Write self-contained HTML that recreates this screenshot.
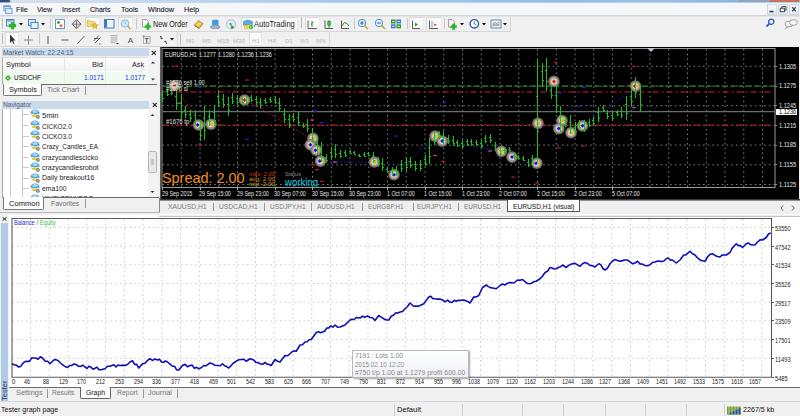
<!DOCTYPE html>
<html><head><meta charset="utf-8">
<style>
*{box-sizing:border-box;margin:0;padding:0}
html,body{width:800px;height:416px;overflow:hidden;background:#f0f0f0;font-family:"Liberation Sans",sans-serif;color:#000}
.a{position:absolute}
.t{position:absolute;white-space:nowrap;line-height:1}
svg{position:absolute;overflow:visible}
</style></head><body>
<div class="a" style="left:0px;top:0px;width:800px;height:3px;background:linear-gradient(90deg,#2f5080 0,#2f5080 9px,#d9deee 11px,#cddcf0 80px,#bcd4ee 200px,#a6c8ec 330px,#9ec4ea 450px,#92bae4 560px,#9cc0e6 650px,#8fb4de 730px)"></div>
<div class="a" style="left:0px;top:1.5px;width:800px;height:1.5px;background:rgba(205,220,238,0.65)"></div>
<div class="a" style="left:739px;top:0px;width:31px;height:1.5px;background:#8fa3bb"></div>
<div class="a" style="left:770px;top:0px;width:29px;height:1.5px;background:#c9705a"></div>
<div class="a" style="left:0px;top:3px;width:800px;height:13px;background:#f5f6f7;border-bottom:1px solid #d5d5d5"></div>
<div class="t" id="t1" style="left:15.6px;top:6px;font-size:8px;color:#141420;transform-origin:0 0;transform:scaleX(0.915);-webkit-text-stroke:0.1px #141420">File</div>
<div class="t" id="t2" style="left:37px;top:6px;font-size:8px;color:#141420;transform-origin:0 0;transform:scaleX(0.878);-webkit-text-stroke:0.1px #141420">View</div>
<div class="t" id="t3" style="left:62px;top:6px;font-size:8px;color:#141420;transform-origin:0 0;transform:scaleX(0.904);-webkit-text-stroke:0.1px #141420">Insert</div>
<div class="t" id="t4" style="left:89.8px;top:6px;font-size:8px;color:#141420;transform-origin:0 0;transform:scaleX(0.870);-webkit-text-stroke:0.1px #141420">Charts</div>
<div class="t" id="t5" style="left:120.5px;top:6px;font-size:8px;color:#141420;transform-origin:0 0;transform:scaleX(0.926);-webkit-text-stroke:0.1px #141420">Tools</div>
<div class="t" id="t6" style="left:148px;top:6px;font-size:8px;color:#141420;transform-origin:0 0;transform:scaleX(0.914);-webkit-text-stroke:0.1px #141420">Window</div>
<div class="t" id="t7" style="left:184.3px;top:6px;font-size:8px;color:#141420;transform-origin:0 0;transform:scaleX(0.912);-webkit-text-stroke:0.1px #141420">Help</div>
<svg style="left:2.5px;top:4.5px" width="10" height="10"><rect x="0.8" y="0.8" width="6.4" height="4.6" fill="#e4eefb" stroke="#5d95dc" stroke-width="0.9"/><rect x="0.8" y="0.8" width="6.4" height="1.1" fill="#5d95dc"/><rect x="2.6" y="3.4" width="6.4" height="5.2" fill="#eef4fc" stroke="#5d95dc" stroke-width="0.9"/><path d="M3.8 5.4h4M3.8 7h4" stroke="#9cc0ec" stroke-width="0.6" stroke-dasharray="1 0.8"/></svg>
<div class="a" style="left:767px;top:4px;width:10px;height:11px;background:linear-gradient(#f4f8fd,#e2ecf8);border:1px solid #cdd8e4"></div>
<div class="a" style="left:778px;top:4px;width:10px;height:11px;background:linear-gradient(#f4f8fd,#e2ecf8);border:1px solid #cdd8e4"></div>
<div class="a" style="left:789px;top:4px;width:10px;height:11px;background:linear-gradient(#f4f8fd,#e2ecf8);border:1px solid #cdd8e4"></div>
<svg style="left:767px;top:4px" width="32" height="11"><rect x="2.5" y="6.8" width="4" height="1.6" fill="#3a3a3a"/><rect x="13.2" y="4.2" width="4.2" height="3.6" fill="none" stroke="#3a3a3a" stroke-width="0.9"/><path d="M14.8 4.2V2.6h4.2v3.6h-1.6" fill="none" stroke="#3a3a3a" stroke-width="0.9"/><path d="M25.2 3.2L28.8 7.4M28.8 3.2L25.2 7.4" stroke="#3a3a3a" stroke-width="1.1"/></svg>
<div class="a" style="left:0;top:16px;width:800px;height:1px;background:#e4e4e4"></div>
<div class="a" style="left:1px;top:31px;width:510px;height:1px;background:#d6d6d6"></div>
<div class="a" style="left:510px;top:17px;width:1px;height:14px;background:#d6d6d6"></div>
<div class="a" style="left:1px;top:45.5px;width:329px;height:1px;background:#d6d6d6"></div>
<div class="a" style="left:177px;top:32px;width:1px;height:14px;background:#d6d6d6"></div>
<div class="a" style="left:329px;top:32px;width:1px;height:14px;background:#d6d6d6"></div>
<div class="a" style="left:2px;top:18px;width:1.2px;height:11px;background:#bdbdbd"></div>
<div class="a" style="left:301px;top:17px;width:1.2px;height:11px;background:#bdbdbd"></div>
<div class="a" style="left:2px;top:33px;width:1.2px;height:11px;background:#bdbdbd"></div>
<div class="a" style="left:180px;top:34px;width:1.2px;height:11px;background:#bdbdbd"></div>
<div class="a" style="left:49.5px;top:18px;width:1px;height:11px;background:#c8c8c8"></div>
<div class="a" style="left:136px;top:18px;width:1px;height:11px;background:#c8c8c8"></div>
<div class="a" style="left:354px;top:18px;width:1px;height:11px;background:#c8c8c8"></div>
<div class="a" style="left:406.5px;top:18px;width:1px;height:11px;background:#c8c8c8"></div>
<div class="a" style="left:443.5px;top:18px;width:1px;height:11px;background:#c8c8c8"></div>
<div class="a" style="left:38.5px;top:33px;width:1px;height:11px;background:#c8c8c8"></div>
<div class="a" style="left:52px;top:16.5px;width:15px;height:13.5px;background:#fafafa;border:1px solid #dadada;border-right-color:#e9e9e9;border-bottom-color:#e9e9e9"></div>
<div class="a" style="left:85px;top:16.5px;width:15px;height:13.5px;background:#fafafa;border:1px solid #dadada;border-right-color:#e9e9e9;border-bottom-color:#e9e9e9"></div>
<div class="a" style="left:118px;top:16.5px;width:15px;height:13.5px;background:#fafafa;border:1px solid #dadada;border-right-color:#e9e9e9;border-bottom-color:#e9e9e9"></div>
<div class="a" style="left:305px;top:16.5px;width:15px;height:13.5px;background:#fafafa;border:1px solid #dadada;border-right-color:#e9e9e9;border-bottom-color:#e9e9e9"></div>
<div class="a" style="left:409px;top:16.5px;width:15px;height:13.5px;background:#fafafa;border:1px solid #dadada;border-right-color:#e9e9e9;border-bottom-color:#e9e9e9"></div>
<div class="a" style="left:426px;top:16.5px;width:16px;height:13.5px;background:#fafafa;border:1px solid #dadada;border-right-color:#e9e9e9;border-bottom-color:#e9e9e9"></div>
<div class="a" style="left:5px;top:32px;width:14px;height:13.5px;background:#fafafa;border:1px solid #dadada;border-right-color:#e9e9e9;border-bottom-color:#e9e9e9"></div>
<div class="a" style="left:249px;top:32px;width:13px;height:13.5px;background:#fafafa;border:1px solid #dadada;border-right-color:#e9e9e9;border-bottom-color:#e9e9e9"></div>
<div class="a" style="left:241px;top:16.5px;width:57px;height:13.5px;background:#fafafa;border:1px solid #dadada;border-right-color:#e9e9e9;border-bottom-color:#e9e9e9"></div>
<svg style="left:0;top:0" width="800" height="50"><rect x="6.5" y="19.5" width="7.5" height="6.5" fill="#dbe8f7" stroke="#4a86c8" stroke-width="1"/><rect x="7" y="20" width="6.5" height="1.5" fill="#7aaee6"/><path d="M11.2 22.5h2.6v2h2v2.6h-2v2h-2.6v-2h-2v-2.6h2z" fill="#1fbe1f" stroke="#128a12" stroke-width="0.4"/><rect x="28.5" y="19.5" width="7" height="6" fill="#dce8f6" stroke="#4a86c8"/><rect x="31" y="22.5" width="7" height="6" fill="#e8f0fa" stroke="#4a86c8"/><rect x="55.5" y="19.5" width="9" height="9" fill="#fff" stroke="#5e9ad6" stroke-width="1"/><circle cx="58.5" cy="22.5" r="1.4" fill="#25a825"/><path d="M61 24L62.8 25.8L61 27.6L59.2 25.8Z" fill="#f06030"/><path d="M76.6 19.7L81.1 24.2L76.6 28.7L72.1 24.2Z" fill="none" stroke="#555" stroke-width="1"/><path d="M76.6 20.5V28M72.9 24.2H80.3" stroke="#555" stroke-width="0.8"/><path d="M87 20.5h3l1 1h3v5h-7z" fill="#f3dc7a" stroke="#c9a83a" stroke-width="0.6"/><path d="M95 22.5l1 2.1 2.2.3-1.6 1.5.4 2.2-2-1.1-2 1.1.4-2.2-1.6-1.5 2.2-.3z" fill="#f2c230" stroke="#b8901a" stroke-width="0.5"/><rect x="104.5" y="19.5" width="9.5" height="8.5" fill="#eef4fb" stroke="#3d7cc4" stroke-width="1"/><rect x="105" y="20" width="2" height="7.5" fill="#3d7cc4"/><circle cx="125" cy="23.5" r="3.8" fill="#d8ebfa" stroke="#7ab0e0" stroke-width="1"/><path d="M125 21.5V23.5L126.5 24.5" stroke="#5a8ec0" stroke-width="0.6" fill="none"/><path d="M127.8 26.3L130.5 29" stroke="#c89a2a" stroke-width="1.5"/><path d="M142.5 19.5h4l2 2v5.5h-6z" fill="#fafafa" stroke="#8a8a8a" stroke-width="0.8"/><path d="M146.8 23.6h2.2v1.8h1.8v2.2h-1.8v1.8h-2.2v-1.8h-1.8v-2.2h1.8z" fill="#1fbe1f" stroke="#128a12" stroke-width="0.3"/><path d="M194.3 25.2L198.6 20.6L203.2 23.6L199.2 28.3Z" fill="#d9a82c" stroke="#9a6c10" stroke-width="0.6"/><path d="M195.6 24.9L198.8 21.6L201.9 23.6L198.9 27Z" fill="#f3d25a"/><path d="M194.5 25.3L199.2 28.3L199.4 29L194.6 26.1Z" fill="#8a5c08"/><rect x="212" y="19.8" width="6.5" height="5.5" rx="1.5" fill="#3f98e0"/><ellipse cx="215.2" cy="27" rx="5" ry="1.8" fill="#9eb4cc" stroke="#6d86a2" stroke-width="0.6"/><circle cx="231" cy="24.2" r="4.6" fill="#e6eef7" stroke="#8fb3d8" stroke-width="0.8"/><path d="M231 24.2L234.5 27.5A4.6 4.6 0 0 1 231 28.8Z" fill="#3aa43a"/><circle cx="230.5" cy="24" r="0.9" fill="#2a5ab0"/><path d="M243.5 21.5q4-3 9 0v3.5h-9z" fill="#5aaae6" stroke="#2c78b8" stroke-width="0.5"/><path d="M243.8 25l8.5 0-1 3.5h-6.5z" fill="#f2d24a" stroke="#c3a020" stroke-width="0.5"/><circle cx="251" cy="27" r="2.4" fill="#1fae1f" stroke="#fff" stroke-width="0.6"/><path d="M250.3 26v2l1.6-1z" fill="#fff"/><path d="M308 20.5V28.5H317" stroke="#333" stroke-width="0.8" fill="none"/><path d="M312 21v6M310.8 24h1.2M312 22.5h1.2" stroke="#1e9a1e" stroke-width="1" fill="none"/><path d="M325 20.5V28.5H333" stroke="#333" stroke-width="0.8" fill="none"/><path d="M329 20v8" stroke="#1e7a1e" stroke-width="0.8"/><rect x="327.8" y="21.5" width="2.6" height="4" fill="#28c828" stroke="#1a7a1a" stroke-width="0.5"/><path d="M341.5 20.5V28.5H349" stroke="#333" stroke-width="0.8" fill="none"/><path d="M342 26L344.5 22.5L347 23.5L349 26" stroke="#1e9a1e" stroke-width="1" fill="none"/><circle cx="362" cy="23" r="3.7" fill="#e2f1fc" stroke="#4a94d6" stroke-width="1"/><path d="M364.6 25.6L368 29" stroke="#d6a820" stroke-width="1.6"/><path d="M360 23H364" stroke="#2a6ab8" stroke-width="1"/><path d="M362 21V25" stroke="#2a6ab8" stroke-width="1"/><circle cx="379" cy="23" r="3.7" fill="#e2f1fc" stroke="#4a94d6" stroke-width="1"/><path d="M381.6 25.6L385 29" stroke="#d6a820" stroke-width="1.6"/><path d="M377 23H381" stroke="#2a6ab8" stroke-width="1"/><rect x="391" y="19.5" width="4.6" height="4" fill="#2a9a2a"/><rect x="396.4" y="19.5" width="4.6" height="4" fill="#3a7ed0"/><rect x="391" y="24.3" width="4.6" height="4" fill="#3a7ed0"/><rect x="396.4" y="24.3" width="4.6" height="4" fill="#2a9a2a"/><path d="M392 21.5h2.6M397.4 21.5h2.6M392 26.3h2.6M397.4 26.3h2.6" stroke="#fff" stroke-width="0.8"/><path d="M412.5 20.5V28.5H420" stroke="#333" stroke-width="0.8" fill="none"/><path d="M415 22.5L418 24.5L415 26.5Z" fill="#20a020"/><path d="M429.5 20.5V28.5H438" stroke="#333" stroke-width="0.8" fill="none"/><path d="M432 21v7" stroke="#4a8ad0" stroke-width="0.8"/><path d="M434 23.5L437 24.8L434 26Z" fill="#e04020"/><path d="M448.5 19.5h4l2 2v5.5h-6z" fill="#fafafa" stroke="#8a8a8a" stroke-width="0.8"/><path d="M452.6 23.8h2.2v1.8h1.8v2.2h-1.8v1.8h-2.2v-1.8h-1.8v-2.2h1.8z" fill="#1fbe1f" stroke="#128a12" stroke-width="0.3"/><circle cx="474.3" cy="23.8" r="4.2" fill="#fff" stroke="#1d5fb0" stroke-width="1.4"/><path d="M474.3 21.5V24L476 25" stroke="#1d3a70" stroke-width="0.7" fill="none"/><rect x="491" y="20" width="10" height="8" fill="#e9f1fa" stroke="#4a86c8" stroke-width="0.9"/><path d="M492.5 24l2.5-1.5 2 1 2.5-1.5M492.5 26l2.5-1 2 .8 2.5-1" stroke="#d05030" stroke-width="0.6" fill="none"/><path d="M492.5 25l2.5-1 2 .8 2.5-1" stroke="#30a030" stroke-width="0.6" fill="none"/><path d="M10 34.5L10 43L12 41L13.5 44L14.5 43.5L13 40.5L15.5 40.5Z" fill="#333"/><path d="M28.5 35.5V44.5M24 40H33" stroke="#8a8a8a" stroke-width="1"/><path d="M48 36V44" stroke="#555" stroke-width="1"/><path d="M61.5 40H68.5" stroke="#666" stroke-width="1.1"/><path d="M77.5 43.5L84.5 36" stroke="#555" stroke-width="0.9"/><path d="M93.5 41L99 35.5M95 43L100.5 37.5M94 38.5L98.5 38.5" stroke="#555" stroke-width="0.9"/><text x="99" y="44.5" font-size="4" font-family="Liberation Sans" fill="#333">c</text><path d="M110.5 35.5h7M110.5 37.3h7M110.5 39.1h7M110.5 40.9h7M110.5 42.7h5" stroke="#9a9a9a" stroke-width="0.7"/><path d="M116 43h3l-1.5 1.5z" fill="#333"/><text x="127.7" y="43.2" font-size="8" font-family="Liberation Sans" fill="#4a4a4a">A</text><rect x="143.5" y="36.5" width="6.5" height="7" fill="none" stroke="#999" stroke-width="0.7"/><text x="144.6" y="43" font-size="7" font-family="Liberation Sans" font-weight="bold" fill="#555">T</text><path d="M142.5 36h2" stroke="#555" stroke-width="0.7"/><path d="M160.5 37.5l2 1.5M164.5 41l2 1.5" stroke="#444" stroke-width="1.3"/><path d="M160 36.5h1.5M166 43.5h1" stroke="#444" stroke-width="1"/></svg>
<svg style="left:18.5px;top:22.8px" width="4" height="3"><path d="M0 0H4L2 2.5Z" fill="#111"/></svg>
<svg style="left:40.5px;top:22.8px" width="4" height="3"><path d="M0 0H4L2 2.5Z" fill="#111"/></svg>
<svg style="left:459.5px;top:22.8px" width="4" height="3"><path d="M0 0H4L2 2.5Z" fill="#111"/></svg>
<svg style="left:481.5px;top:22.8px" width="4" height="3"><path d="M0 0H4L2 2.5Z" fill="#111"/></svg>
<svg style="left:503px;top:22.8px" width="4" height="3"><path d="M0 0H4L2 2.5Z" fill="#111"/></svg>
<svg style="left:169.8px;top:38.3px" width="4" height="3"><path d="M0 0H4L2 2.5Z" fill="#111"/></svg>
<div class="t" id="t8" style="left:153.1px;top:21px;font-size:8.2px;color:#1a1a1a;transform-origin:0 0;transform:scaleX(0.874);">New Order</div>
<div class="t" id="t9" style="left:254.1px;top:21px;font-size:8.2px;color:#1a1a1a;transform-origin:0 0;transform:scaleX(0.921);">AutoTrading</div>
<div class="t" style="left:186px;top:37.8px;font-size:6.1px;color:#b5b5b5;letter-spacing:0.1px">M1</div>
<div class="t" style="left:202px;top:37.8px;font-size:6.1px;color:#b5b5b5;letter-spacing:0.1px">M5</div>
<div class="t" style="left:217px;top:37.8px;font-size:6.1px;color:#b5b5b5;letter-spacing:0.1px">M15</div>
<div class="t" style="left:233px;top:37.8px;font-size:6.1px;color:#b5b5b5;letter-spacing:0.1px">M30</div>
<div class="t" style="left:252px;top:37.8px;font-size:6.1px;color:#b5b5b5;letter-spacing:0.1px">H1</div>
<div class="t" style="left:268px;top:37.8px;font-size:6.1px;color:#b5b5b5;letter-spacing:0.1px">H4</div>
<div class="t" style="left:285px;top:37.8px;font-size:6.1px;color:#b5b5b5;letter-spacing:0.1px">D1</div>
<div class="t" style="left:300px;top:37.8px;font-size:6.1px;color:#b5b5b5;letter-spacing:0.1px">W1</div>
<div class="t" style="left:316px;top:37.8px;font-size:6.1px;color:#b5b5b5;letter-spacing:0.1px">MN</div>
<svg style="left:764px;top:18px" width="36" height="12"><circle cx="7.2" cy="3.8" r="2.6" fill="none" stroke="#2a5ec0" stroke-width="1.3"/><path d="M5.4 5.6L2.5 8.5" stroke="#2a5ec0" stroke-width="1.8"/><ellipse cx="25" cy="6" rx="4" ry="2.8" fill="#f6f6f6" stroke="#8a8a8a" stroke-width="0.8"/><ellipse cx="29.5" cy="4.5" rx="4" ry="2.8" fill="#f6f6f6" stroke="#8a8a8a" stroke-width="0.8"/><path d="M23 8.5L21.5 10.5L25 8.7" fill="#f6f6f6" stroke="#8a8a8a" stroke-width="0.6"/></svg>
<div class="a" style="left:2px;top:48px;width:147px;height:8px;background:#cadaeb"></div>
<div class="t" id="t19" style="left:2.7px;top:50px;font-size:6.8px;color:#4d5e73;transform-origin:0 0;transform:scaleX(0.980);">Market Watch: 22:24:15</div>
<svg style="left:151px;top:49.5px" width="6" height="6"><path d="M0.8 0.8L4.8 4.8M4.8 0.8L0.8 4.8" stroke="#222" stroke-width="1.1"/></svg>
<div class="a" style="left:2px;top:57px;width:146px;height:27px;background:#fff;border-left:1px solid #a8a8a8;border-top:1px solid #dadada"></div>
<div class="a" style="left:3px;top:58px;width:145px;height:13px;background:linear-gradient(#fff,#f2f2f2)"></div>
<div class="a" style="left:64px;top:58px;width:1px;height:13px;background:#e2e2e2"></div>
<div class="a" style="left:105px;top:58px;width:1px;height:13px;background:#e2e2e2"></div>
<div class="a" style="left:3px;top:72px;width:145px;height:12px;background:#effbef"></div>
<div class="a" style="left:64px;top:72px;width:1px;height:12px;background:#e2eee2"></div>
<div class="a" style="left:105px;top:72px;width:1px;height:12px;background:#e2eee2"></div>
<div class="t" id="t20" style="left:5.6px;top:61px;font-size:8px;color:#222;transform-origin:0 0;transform:scaleX(0.922);">Symbol</div>
<div class="t" id="t21" style="left:92px;top:61px;font-size:8px;color:#222;transform-origin:0 0;transform:scaleX(0.934);">Bid</div>
<div class="t" id="t22" style="left:132px;top:61px;font-size:8px;color:#222;transform-origin:0 0;transform:scaleX(0.899);">Ask</div>
<svg style="left:5px;top:75px" width="6" height="6"><path d="M3 0L6 3L3 6L0 3Z" fill="#2aa52a"/><path d="M3 1.5L4.5 3L3 4.5L1.5 3Z" fill="#9fe89f"/></svg>
<div class="t" id="t23" style="left:13.6px;top:74px;font-size:8px;color:#111;transform-origin:0 0;transform:scaleX(0.810);">USDCHF</div>
<div class="t" id="t24" style="left:83.6px;top:74px;font-size:7.8px;color:#2a2ae6;transform-origin:0 0;transform:scaleX(0.838);">1.0171</div>
<div class="t" id="t25" style="left:124.6px;top:74px;font-size:7.8px;color:#2a2ae6;transform-origin:0 0;transform:scaleX(0.847);">1.0177</div>
<div class="a" style="left:148px;top:57px;width:9px;height:27px;background:#f3f3f3"></div>
<svg style="left:149px;top:60px" width="8" height="22"><path d="M2 3.5L4 1.5L6 3.5Z" fill="#333"/><path d="M2 18.5L4 20.5L6 18.5Z" fill="#333"/></svg>
<div class="a" style="left:2px;top:84px;width:155px;height:13px;background:#f0f0f0"></div>
<div class="a" style="left:3px;top:84px;width:39px;height:12px;background:#fff;border:1px solid #777;border-top:none;border-radius:0 0 2px 2px"></div>
<div class="a" style="left:41px;top:84px;width:116px;height:1px;background:#6a6a6a"></div>
<div class="t" id="t26" style="left:8.6px;top:86px;font-size:8px;color:#111;transform-origin:0 0;transform:scaleX(0.906);">Symbols</div>
<div class="t" id="t27" style="left:47.2px;top:86px;font-size:8px;color:#6e6e6e;transform-origin:0 0;transform:scaleX(0.891);">Tick Chart</div>
<div class="a" style="left:85px;top:86px;width:1px;height:9px;background:#999"></div>
<div class="a" style="left:2px;top:101px;width:147px;height:8px;background:#cadaeb"></div>
<div class="t" id="t28" style="left:2.7px;top:102px;font-size:6.8px;color:#4d5e73;transform-origin:0 0;transform:scaleX(0.973);">Navigator</div>
<svg style="left:151.5px;top:102px" width="6" height="6"><path d="M0.8 0.8L4.8 4.8M4.8 0.8L0.8 4.8" stroke="#222" stroke-width="1.1"/></svg>
<div class="a" style="left:2px;top:109px;width:146px;height:89px;background:#fff;border-left:1px solid #a8a8a8;border-bottom:1px solid #a0a0a0"></div>
<div class="a" style="left:148px;top:109px;width:9px;height:89px;background:#f3f3f3;border-bottom:1px solid #a0a0a0"></div>
<svg style="left:148px;top:109px" width="9" height="88"><path d="M2.5 7L4.5 5L6.5 7Z" fill="#333"/><path d="M2.5 82L4.5 84L6.5 82Z" fill="#333"/><rect x="0.5" y="42.5" width="8" height="21" rx="1" fill="#e8e8e8" stroke="#b5b5b5"/><path d="M3 51h3M3 53h3M3 55h3" stroke="#888" stroke-width="0.7"/></svg>
<div class="a" style="left:10px;top:109px;width:1px;height:89px;background:#c8c8c8"></div>
<div class="a" style="left:22px;top:109px;width:1px;height:89px;background:#c8c8c8"></div>
<div class="a" style="left:23px;top:114px;width:6px;height:1px;background:#c8c8c8"></div>
<svg style="left:29.5px;top:109.3px" width="11" height="10"><path d="M0.3 4.6Q1 0.6 5 0.5Q9 0.6 9.8 4.6Q5 6.2 0.3 4.6Z" fill="#4aa3de"/><ellipse cx="5" cy="2.6" rx="2.8" ry="1.5" fill="#a8d8f6"/><path d="M1.2 5.2Q5 6.8 9 5.2L8.2 7.4Q5 8.8 2 7.4Z" fill="#e9c63a"/><circle cx="7.9" cy="7.9" r="1.9" fill="#7e7e7e"/><circle cx="7.9" cy="7.9" r="0.7" fill="#ddd"/></svg>
<div class="t" id="t29" style="left:42.4px;top:112px;font-size:7.6px;color:#1a1a1a;transform-origin:0 0;transform:scaleX(0.996);">5min</div>
<div class="a" style="left:23px;top:125px;width:6px;height:1px;background:#c8c8c8"></div>
<svg style="left:29.5px;top:119.8px" width="11" height="10"><path d="M0.3 4.6Q1 0.6 5 0.5Q9 0.6 9.8 4.6Q5 6.2 0.3 4.6Z" fill="#4aa3de"/><ellipse cx="5" cy="2.6" rx="2.8" ry="1.5" fill="#a8d8f6"/><path d="M1.2 5.2Q5 6.8 9 5.2L8.2 7.4Q5 8.8 2 7.4Z" fill="#e9c63a"/><circle cx="7.9" cy="7.9" r="1.9" fill="#7e7e7e"/><circle cx="7.9" cy="7.9" r="0.7" fill="#ddd"/></svg>
<div class="t" id="t30" style="left:42.4px;top:123px;font-size:7.6px;color:#1a1a1a;transform-origin:0 0;transform:scaleX(0.861);">CICKO2.0</div>
<div class="a" style="left:23px;top:136px;width:6px;height:1px;background:#c8c8c8"></div>
<svg style="left:29.5px;top:130.4px" width="11" height="10"><path d="M0.3 4.6Q1 0.6 5 0.5Q9 0.6 9.8 4.6Q5 6.2 0.3 4.6Z" fill="#4aa3de"/><ellipse cx="5" cy="2.6" rx="2.8" ry="1.5" fill="#a8d8f6"/><path d="M1.2 5.2Q5 6.8 9 5.2L8.2 7.4Q5 8.8 2 7.4Z" fill="#e9c63a"/><circle cx="7.9" cy="7.9" r="1.9" fill="#7e7e7e"/><circle cx="7.9" cy="7.9" r="0.7" fill="#ddd"/></svg>
<div class="t" id="t31" style="left:42.4px;top:133px;font-size:7.6px;color:#1a1a1a;transform-origin:0 0;transform:scaleX(0.861);">CICKO3.0</div>
<div class="a" style="left:23px;top:146px;width:6px;height:1px;background:#c8c8c8"></div>
<svg style="left:29.5px;top:141.0px" width="11" height="10"><path d="M0.3 4.6Q1 0.6 5 0.5Q9 0.6 9.8 4.6Q5 6.2 0.3 4.6Z" fill="#4aa3de"/><ellipse cx="5" cy="2.6" rx="2.8" ry="1.5" fill="#a8d8f6"/><path d="M1.2 5.2Q5 6.8 9 5.2L8.2 7.4Q5 8.8 2 7.4Z" fill="#e9c63a"/><circle cx="7.9" cy="7.9" r="1.9" fill="#7e7e7e"/><circle cx="7.9" cy="7.9" r="0.7" fill="#ddd"/></svg>
<div class="t" id="t32" style="left:42.4px;top:143px;font-size:7.6px;color:#1a1a1a;transform-origin:0 0;transform:scaleX(0.845);">Crazy_Candles_EA</div>
<div class="a" style="left:23px;top:157px;width:6px;height:1px;background:#c8c8c8"></div>
<svg style="left:29.5px;top:151.5px" width="11" height="10"><path d="M0.3 4.6Q1 0.6 5 0.5Q9 0.6 9.8 4.6Q5 6.2 0.3 4.6Z" fill="#4aa3de"/><ellipse cx="5" cy="2.6" rx="2.8" ry="1.5" fill="#a8d8f6"/><path d="M1.2 5.2Q5 6.8 9 5.2L8.2 7.4Q5 8.8 2 7.4Z" fill="#e9c63a"/><circle cx="7.9" cy="7.9" r="1.9" fill="#7e7e7e"/><circle cx="7.9" cy="7.9" r="0.7" fill="#ddd"/></svg>
<div class="t" id="t33" style="left:42.4px;top:154px;font-size:7.6px;color:#1a1a1a;transform-origin:0 0;transform:scaleX(0.909);">crazycandlescicko</div>
<div class="a" style="left:23px;top:167px;width:6px;height:1px;background:#c8c8c8"></div>
<svg style="left:29.5px;top:162.1px" width="11" height="10"><path d="M0.3 4.6Q1 0.6 5 0.5Q9 0.6 9.8 4.6Q5 6.2 0.3 4.6Z" fill="#4aa3de"/><ellipse cx="5" cy="2.6" rx="2.8" ry="1.5" fill="#a8d8f6"/><path d="M1.2 5.2Q5 6.8 9 5.2L8.2 7.4Q5 8.8 2 7.4Z" fill="#e9c63a"/><circle cx="7.9" cy="7.9" r="1.9" fill="#7e7e7e"/><circle cx="7.9" cy="7.9" r="0.7" fill="#ddd"/></svg>
<div class="t" id="t34" style="left:42.4px;top:164px;font-size:7.6px;color:#1a1a1a;transform-origin:0 0;transform:scaleX(0.917);">crazycandlesrobot</div>
<div class="a" style="left:23px;top:178px;width:6px;height:1px;background:#c8c8c8"></div>
<svg style="left:29.5px;top:172.6px" width="11" height="10"><path d="M0.3 4.6Q1 0.6 5 0.5Q9 0.6 9.8 4.6Q5 6.2 0.3 4.6Z" fill="#4aa3de"/><ellipse cx="5" cy="2.6" rx="2.8" ry="1.5" fill="#a8d8f6"/><path d="M1.2 5.2Q5 6.8 9 5.2L8.2 7.4Q5 8.8 2 7.4Z" fill="#e9c63a"/><circle cx="7.9" cy="7.9" r="1.9" fill="#7e7e7e"/><circle cx="7.9" cy="7.9" r="0.7" fill="#ddd"/></svg>
<div class="t" id="t35" style="left:42.4px;top:174px;font-size:7.6px;color:#1a1a1a;transform-origin:0 0;transform:scaleX(0.919);">Daily breakout16</div>
<div class="a" style="left:23px;top:188px;width:6px;height:1px;background:#c8c8c8"></div>
<svg style="left:29.5px;top:183.2px" width="11" height="10"><path d="M0.3 4.6Q1 0.6 5 0.5Q9 0.6 9.8 4.6Q5 6.2 0.3 4.6Z" fill="#4aa3de"/><ellipse cx="5" cy="2.6" rx="2.8" ry="1.5" fill="#a8d8f6"/><path d="M1.2 5.2Q5 6.8 9 5.2L8.2 7.4Q5 8.8 2 7.4Z" fill="#e9c63a"/><circle cx="7.9" cy="7.9" r="1.9" fill="#7e7e7e"/><circle cx="7.9" cy="7.9" r="0.7" fill="#ddd"/></svg>
<div class="t" id="t36" style="left:42.4px;top:185px;font-size:7.6px;color:#1a1a1a;transform-origin:0 0;transform:scaleX(0.889);">ema100</div>
<div class="a" style="left:23px;top:199px;width:6px;height:1px;background:#c8c8c8"></div>
<svg style="left:29.5px;top:193.7px" width="11" height="10"><path d="M0.3 4.6Q1 0.6 5 0.5Q9 0.6 9.8 4.6Q5 6.2 0.3 4.6Z" fill="#4aa3de"/><ellipse cx="5" cy="2.6" rx="2.8" ry="1.5" fill="#a8d8f6"/><path d="M1.2 5.2Q5 6.8 9 5.2L8.2 7.4Q5 8.8 2 7.4Z" fill="#e9c63a"/><circle cx="7.9" cy="7.9" r="1.9" fill="#7e7e7e"/><circle cx="7.9" cy="7.9" r="0.7" fill="#ddd"/></svg>
<div class="a" style="left:40px;top:193px;width:108px;height:4px;overflow:hidden"><div class="t" style="left:2.4px;top:1.6px;font-size:7.6px;color:#1a1a1a;transform-origin:0 0;transform:scaleX(0.86)">VIVOLTONYDDO</div></div>
<div class="a" style="left:2px;top:198px;width:155px;height:12px;background:#f0f0f0"></div>
<div class="a" style="left:3px;top:197px;width:41px;height:13px;background:#fff;border:1px solid #777;border-top:none;border-radius:0 0 2px 2px"></div>
<div class="a" style="left:43px;top:197px;width:116px;height:1px;background:#6a6a6a"></div>
<div class="t" id="t37" style="left:9px;top:200px;font-size:8px;color:#111;transform-origin:0 0;transform:scaleX(0.943);">Common</div>
<div class="t" id="t38" style="left:50.6px;top:200px;font-size:8px;color:#6e6e6e;transform-origin:0 0;transform:scaleX(0.857);">Favorites</div>
<div class="a" style="left:85px;top:199px;width:1px;height:9px;background:#999"></div>
<div class="a" style="left:160px;top:47px;width:638.5px;height:152px;background:#000"></div>
<svg style="left:0;top:0" width="800" height="416" viewBox="0 0 800 416"><rect x="162" y="48.5" width="613" height="139" fill="none" stroke="#9a9a9a" stroke-width="1"/><rect x="160" y="47" width="1.2" height="152" fill="#5a5a5a"/><line x1="181.25" y1="49" x2="181.25" y2="187.5" stroke="#8c8c8c" stroke-width="0.9" stroke-dasharray="1.6 3.1"/><line x1="200.00" y1="49" x2="200.00" y2="187.5" stroke="#8c8c8c" stroke-width="0.9" stroke-dasharray="1.6 3.1"/><line x1="218.75" y1="49" x2="218.75" y2="187.5" stroke="#8c8c8c" stroke-width="0.9" stroke-dasharray="1.6 3.1"/><line x1="237.50" y1="49" x2="237.50" y2="187.5" stroke="#8c8c8c" stroke-width="0.9" stroke-dasharray="1.6 3.1"/><line x1="256.25" y1="49" x2="256.25" y2="187.5" stroke="#8c8c8c" stroke-width="0.9" stroke-dasharray="1.6 3.1"/><line x1="275.00" y1="49" x2="275.00" y2="187.5" stroke="#8c8c8c" stroke-width="0.9" stroke-dasharray="1.6 3.1"/><line x1="293.75" y1="49" x2="293.75" y2="187.5" stroke="#8c8c8c" stroke-width="0.9" stroke-dasharray="1.6 3.1"/><line x1="312.50" y1="49" x2="312.50" y2="187.5" stroke="#8c8c8c" stroke-width="0.9" stroke-dasharray="1.6 3.1"/><line x1="331.25" y1="49" x2="331.25" y2="187.5" stroke="#8c8c8c" stroke-width="0.9" stroke-dasharray="1.6 3.1"/><line x1="350.00" y1="49" x2="350.00" y2="187.5" stroke="#8c8c8c" stroke-width="0.9" stroke-dasharray="1.6 3.1"/><line x1="368.75" y1="49" x2="368.75" y2="187.5" stroke="#8c8c8c" stroke-width="0.9" stroke-dasharray="1.6 3.1"/><line x1="387.50" y1="49" x2="387.50" y2="187.5" stroke="#8c8c8c" stroke-width="0.9" stroke-dasharray="1.6 3.1"/><line x1="406.25" y1="49" x2="406.25" y2="187.5" stroke="#8c8c8c" stroke-width="0.9" stroke-dasharray="1.6 3.1"/><line x1="425.00" y1="49" x2="425.00" y2="187.5" stroke="#8c8c8c" stroke-width="0.9" stroke-dasharray="1.6 3.1"/><line x1="443.75" y1="49" x2="443.75" y2="187.5" stroke="#8c8c8c" stroke-width="0.9" stroke-dasharray="1.6 3.1"/><line x1="462.50" y1="49" x2="462.50" y2="187.5" stroke="#8c8c8c" stroke-width="0.9" stroke-dasharray="1.6 3.1"/><line x1="481.25" y1="49" x2="481.25" y2="187.5" stroke="#8c8c8c" stroke-width="0.9" stroke-dasharray="1.6 3.1"/><line x1="500.00" y1="49" x2="500.00" y2="187.5" stroke="#8c8c8c" stroke-width="0.9" stroke-dasharray="1.6 3.1"/><line x1="518.75" y1="49" x2="518.75" y2="187.5" stroke="#8c8c8c" stroke-width="0.9" stroke-dasharray="1.6 3.1"/><line x1="537.50" y1="49" x2="537.50" y2="187.5" stroke="#8c8c8c" stroke-width="0.9" stroke-dasharray="1.6 3.1"/><line x1="556.25" y1="49" x2="556.25" y2="187.5" stroke="#8c8c8c" stroke-width="0.9" stroke-dasharray="1.6 3.1"/><line x1="575.00" y1="49" x2="575.00" y2="187.5" stroke="#8c8c8c" stroke-width="0.9" stroke-dasharray="1.6 3.1"/><line x1="593.75" y1="49" x2="593.75" y2="187.5" stroke="#8c8c8c" stroke-width="0.9" stroke-dasharray="1.6 3.1"/><line x1="612.50" y1="49" x2="612.50" y2="187.5" stroke="#8c8c8c" stroke-width="0.9" stroke-dasharray="1.6 3.1"/><line x1="631.25" y1="49" x2="631.25" y2="187.5" stroke="#8c8c8c" stroke-width="0.9" stroke-dasharray="1.6 3.1"/><line x1="650.00" y1="49" x2="650.00" y2="187.5" stroke="#8c8c8c" stroke-width="0.9" stroke-dasharray="1.6 3.1"/><line x1="668.75" y1="49" x2="668.75" y2="187.5" stroke="#8c8c8c" stroke-width="0.9" stroke-dasharray="1.6 3.1"/><line x1="687.50" y1="49" x2="687.50" y2="187.5" stroke="#8c8c8c" stroke-width="0.9" stroke-dasharray="1.6 3.1"/><line x1="706.25" y1="49" x2="706.25" y2="187.5" stroke="#8c8c8c" stroke-width="0.9" stroke-dasharray="1.6 3.1"/><line x1="725.00" y1="49" x2="725.00" y2="187.5" stroke="#8c8c8c" stroke-width="0.9" stroke-dasharray="1.6 3.1"/><line x1="743.75" y1="49" x2="743.75" y2="187.5" stroke="#8c8c8c" stroke-width="0.9" stroke-dasharray="1.6 3.1"/><line x1="762.50" y1="49" x2="762.50" y2="187.5" stroke="#8c8c8c" stroke-width="0.9" stroke-dasharray="1.6 3.1"/><line x1="162.5" y1="66.30" x2="775" y2="66.30" stroke="#8c8c8c" stroke-width="0.9" stroke-dasharray="1.6 3.1"/><line x1="162.5" y1="86.00" x2="775" y2="86.00" stroke="#8c8c8c" stroke-width="0.9" stroke-dasharray="1.6 3.1"/><line x1="162.5" y1="105.70" x2="775" y2="105.70" stroke="#8c8c8c" stroke-width="0.9" stroke-dasharray="1.6 3.1"/><line x1="162.5" y1="125.40" x2="775" y2="125.40" stroke="#8c8c8c" stroke-width="0.9" stroke-dasharray="1.6 3.1"/><line x1="162.5" y1="145.10" x2="775" y2="145.10" stroke="#8c8c8c" stroke-width="0.9" stroke-dasharray="1.6 3.1"/><line x1="162.5" y1="164.80" x2="775" y2="164.80" stroke="#8c8c8c" stroke-width="0.9" stroke-dasharray="1.6 3.1"/><line x1="162.5" y1="184.50" x2="775" y2="184.50" stroke="#8c8c8c" stroke-width="0.9" stroke-dasharray="1.6 3.1"/><line x1="162.5" y1="86.1" x2="775" y2="86.1" stroke="#1e8c1e" stroke-width="1.3" stroke-dasharray="5 3"/><line x1="162.5" y1="91.9" x2="775" y2="91.9" stroke="#b01818" stroke-width="1.3" stroke-dasharray="6 3 2 3"/><line x1="162.5" y1="125.2" x2="775" y2="125.2" stroke="#b01818" stroke-width="1.3" stroke-dasharray="6 3 2 3"/><line x1="162.5" y1="111.6" x2="775" y2="111.6" stroke="#686d74" stroke-width="1.2"/><line x1="179" y1="92" x2="197" y2="119" stroke="#c01818" stroke-width="1" stroke-dasharray="1.5 2"/><line x1="248" y1="101" x2="310" y2="138" stroke="#c01818" stroke-width="1" stroke-dasharray="1.5 2"/><line x1="198" y1="125" x2="210" y2="124" stroke="#2020d8" stroke-width="1" stroke-dasharray="1.5 2"/><line x1="330" y1="162" x2="374" y2="162" stroke="#2020d8" stroke-width="1" stroke-dasharray="1.5 2"/><line x1="395" y1="174" x2="432" y2="140" stroke="#2020d8" stroke-width="1" stroke-dasharray="1.5 2"/><line x1="442" y1="141" x2="501" y2="151" stroke="#2020d8" stroke-width="1" stroke-dasharray="1.5 2"/><line x1="512" y1="157" x2="536" y2="163" stroke="#2020d8" stroke-width="1" stroke-dasharray="1.5 2"/><line x1="537.4" y1="123" x2="537.4" y2="163" stroke="#2020d8" stroke-width="1" stroke-dasharray="1.5 2"/><line x1="559" y1="128" x2="571" y2="133" stroke="#2020d8" stroke-width="1" stroke-dasharray="1.5 2"/><line x1="583" y1="126" x2="632" y2="90" stroke="#2020d8" stroke-width="1" stroke-dasharray="1.5 2"/><line x1="316" y1="150" x2="320" y2="161" stroke="#2020d8" stroke-width="1" stroke-dasharray="1.5 2"/><rect x="174.39999999999998" y="65.4" width="3.6" height="1.3" fill="#c01818"/><rect x="245.2" y="79.4" width="3.6" height="1.3" fill="#c01818"/><rect x="632.2" y="65.80000000000001" width="3.6" height="1.3" fill="#c01818"/><rect x="553.8000000000001" y="61.9" width="3.6" height="1.3" fill="#c01818"/><rect x="177.2" y="102.4" width="3.6" height="1.3" fill="#c040a0"/><rect x="433.2" y="154.9" width="3.6" height="1.3" fill="#c040a0"/><rect x="488.2" y="150.4" width="3.6" height="1.3" fill="#c040a0"/><rect x="632.2" y="107.0" width="3.6" height="1.3" fill="#c040a0"/><rect x="333.2" y="161.4" width="3.6" height="1.3" fill="#c040a0"/><rect x="311.2" y="163.9" width="3.6" height="1.3" fill="#c01818"/><rect x="315.2" y="169.0" width="3.6" height="1.3" fill="#c01818"/><rect x="320.2" y="180.70000000000002" width="3.6" height="1.3" fill="#c01818"/><rect x="441.2" y="160.70000000000002" width="3.6" height="1.3" fill="#c01818"/><rect x="557.2" y="147.20000000000002" width="3.6" height="1.3" fill="#c01818"/><rect x="581.2" y="145.4" width="3.6" height="1.3" fill="#c01818"/><rect x="511.2" y="176.4" width="3.6" height="1.3" fill="#c01818"/><rect x="394.2" y="135.4" width="3.6" height="1.3" fill="#2020d8"/><rect x="245.2" y="138.8" width="3.6" height="1.3" fill="#2020d8"/><rect x="198.0" y="85.5" width="3.6" height="1.3" fill="#2020d8"/><rect x="442.2" y="101.9" width="3.6" height="1.3" fill="#2020d8"/><rect x="558.2" y="92.4" width="3.6" height="1.3" fill="#2020d8"/><rect x="578.2" y="105.4" width="3.6" height="1.3" fill="#2020d8"/><rect x="582.2" y="86.9" width="3.6" height="1.3" fill="#2020d8"/><rect x="198.2" y="144.4" width="3.6" height="1.3" fill="#c01818"/><rect x="535.2" y="182.4" width="3.6" height="1.3" fill="#c01818"/><rect x="558.2" y="123.4" width="3.6" height="1.3" fill="#c040a0"/><rect x="313.7" y="110.4" width="3.6" height="1.3" fill="#2020d8"/><rect x="319.7" y="121.9" width="3.6" height="1.3" fill="#2020d8"/><rect x="310.2" y="119.4" width="3.6" height="1.3" fill="#c040a0"/><circle cx="174.5" cy="85.5" r="5.8" fill="#7a7064" opacity="0.95"/><circle cx="174.5" cy="85.5" r="4.6" fill="#a09486"/><circle cx="174.5" cy="85.5" r="3.1" fill="#d8cfc4"/><path d="M172.5 85.5L174.5 83.5L176.5 85.5L174.5 87.5Z" fill="#f01010"/><circle cx="244.5" cy="100" r="5.8" fill="#7a7064" opacity="0.95"/><circle cx="244.5" cy="100" r="4.6" fill="#a09486"/><circle cx="244.5" cy="100" r="3.1" fill="#d8cfc4"/><path d="M242.5 100L244.5 98L246.5 100L244.5 102Z" fill="#f01010"/><circle cx="198.5" cy="125" r="5.8" fill="#7a7064" opacity="0.95"/><circle cx="198.5" cy="125" r="4.6" fill="#a09486"/><circle cx="198.5" cy="125" r="3.1" fill="#d8cfc4"/><path d="M195.7 125L197.7 123L199.7 125L197.7 127Z" fill="#1010f0"/><path d="M199.1 125L201.7 123V127Z" fill="#f0a818"/><circle cx="211" cy="124.2" r="5.8" fill="#7a7064" opacity="0.95"/><circle cx="211" cy="124.2" r="4.6" fill="#a09486"/><circle cx="211" cy="124.2" r="3.1" fill="#d8cfc4"/><path d="M209.2 124.2L212.8 121.8V126.60000000000001Z" fill="#f0a818"/><circle cx="312.9" cy="138.4" r="5.8" fill="#7a7064" opacity="0.95"/><circle cx="312.9" cy="138.4" r="4.6" fill="#a09486"/><circle cx="312.9" cy="138.4" r="3.1" fill="#d8cfc4"/><path d="M311.09999999999997 138.4L314.7 136.0V140.8Z" fill="#f0a818"/><circle cx="310.4" cy="144.8" r="5.8" fill="#7a7064" opacity="0.95"/><circle cx="310.4" cy="144.8" r="4.6" fill="#a09486"/><circle cx="310.4" cy="144.8" r="3.1" fill="#d8cfc4"/><path d="M308.4 144.8L310.4 142.8L312.4 144.8L310.4 146.8Z" fill="#1010f0"/><circle cx="316.2" cy="150.2" r="5.8" fill="#7a7064" opacity="0.95"/><circle cx="316.2" cy="150.2" r="4.6" fill="#a09486"/><circle cx="316.2" cy="150.2" r="3.1" fill="#d8cfc4"/><path d="M313.4 150.2L315.4 148.2L317.4 150.2L315.4 152.2Z" fill="#1010f0"/><path d="M316.8 150.2L319.4 148.2V152.2Z" fill="#f0a818"/><circle cx="320.5" cy="161.1" r="5.8" fill="#7a7064" opacity="0.95"/><circle cx="320.5" cy="161.1" r="4.6" fill="#a09486"/><circle cx="320.5" cy="161.1" r="3.1" fill="#d8cfc4"/><path d="M317.7 161.1L319.7 159.1L321.7 161.1L319.7 163.1Z" fill="#1010f0"/><path d="M321.1 161.1L323.7 159.1V163.1Z" fill="#f0a818"/><circle cx="374.3" cy="162" r="5.8" fill="#7a7064" opacity="0.95"/><circle cx="374.3" cy="162" r="4.6" fill="#a09486"/><circle cx="374.3" cy="162" r="3.1" fill="#d8cfc4"/><path d="M372.5 162L376.1 159.6V164.4Z" fill="#f0a818"/><circle cx="394" cy="174.7" r="5.8" fill="#7a7064" opacity="0.95"/><circle cx="394" cy="174.7" r="4.6" fill="#a09486"/><circle cx="394" cy="174.7" r="3.1" fill="#d8cfc4"/><path d="M392 174.7L394 172.7L396 174.7L394 176.7Z" fill="#1010f0"/><circle cx="435.1" cy="136.1" r="5.8" fill="#7a7064" opacity="0.95"/><circle cx="435.1" cy="136.1" r="4.6" fill="#a09486"/><circle cx="435.1" cy="136.1" r="3.1" fill="#d8cfc4"/><path d="M433.3 136.1L436.90000000000003 133.7V138.5Z" fill="#f0a818"/><circle cx="442.2" cy="141.1" r="5.8" fill="#7a7064" opacity="0.95"/><circle cx="442.2" cy="141.1" r="4.6" fill="#a09486"/><circle cx="442.2" cy="141.1" r="3.1" fill="#d8cfc4"/><path d="M440.2 141.1L442.2 139.1L444.2 141.1L442.2 143.1Z" fill="#1010f0"/><circle cx="501.4" cy="151.3" r="5.8" fill="#7a7064" opacity="0.95"/><circle cx="501.4" cy="151.3" r="4.6" fill="#a09486"/><circle cx="501.4" cy="151.3" r="3.1" fill="#d8cfc4"/><path d="M499.59999999999997 151.3L503.2 148.9V153.70000000000002Z" fill="#f0a818"/><circle cx="512" cy="157.1" r="5.8" fill="#7a7064" opacity="0.95"/><circle cx="512" cy="157.1" r="4.6" fill="#a09486"/><circle cx="512" cy="157.1" r="3.1" fill="#d8cfc4"/><path d="M510 157.1L512 155.1L514 157.1L512 159.1Z" fill="#1010f0"/><circle cx="536.8" cy="163.2" r="5.8" fill="#7a7064" opacity="0.95"/><circle cx="536.8" cy="163.2" r="4.6" fill="#a09486"/><circle cx="536.8" cy="163.2" r="3.1" fill="#d8cfc4"/><path d="M534.0 163.2L536.0 161.2L538.0 163.2L536.0 165.2Z" fill="#1010f0"/><path d="M537.4 163.2L540.0 161.2V165.2Z" fill="#f0a818"/><circle cx="538" cy="123.3" r="5.8" fill="#7a7064" opacity="0.95"/><circle cx="538" cy="123.3" r="4.6" fill="#a09486"/><circle cx="538" cy="123.3" r="3.1" fill="#d8cfc4"/><path d="M536.2 123.3L539.8 120.89999999999999V125.7Z" fill="#f0a818"/><circle cx="554" cy="81.4" r="5.8" fill="#7a7064" opacity="0.95"/><circle cx="554" cy="81.4" r="4.6" fill="#a09486"/><circle cx="554" cy="81.4" r="3.1" fill="#d8cfc4"/><path d="M552 81.4L554 79.4L556 81.4L554 83.4Z" fill="#f01010"/><circle cx="562" cy="120.5" r="5.8" fill="#7a7064" opacity="0.95"/><circle cx="562" cy="120.5" r="4.6" fill="#a09486"/><circle cx="562" cy="120.5" r="3.1" fill="#d8cfc4"/><path d="M560.2 120.5L563.8 118.1V122.9Z" fill="#f0a818"/><circle cx="558.8" cy="128.6" r="5.8" fill="#7a7064" opacity="0.95"/><circle cx="558.8" cy="128.6" r="4.6" fill="#a09486"/><circle cx="558.8" cy="128.6" r="3.1" fill="#d8cfc4"/><path d="M556.8 128.6L558.8 126.6L560.8 128.6L558.8 130.6Z" fill="#1010f0"/><circle cx="571" cy="132.7" r="5.8" fill="#7a7064" opacity="0.95"/><circle cx="571" cy="132.7" r="4.6" fill="#a09486"/><circle cx="571" cy="132.7" r="3.1" fill="#d8cfc4"/><path d="M569.2 132.7L572.8 130.29999999999998V135.1Z" fill="#f0a818"/><circle cx="582.5" cy="125.8" r="5.8" fill="#7a7064" opacity="0.95"/><circle cx="582.5" cy="125.8" r="4.6" fill="#a09486"/><circle cx="582.5" cy="125.8" r="3.1" fill="#d8cfc4"/><path d="M580.5 125.8L582.5 123.8L584.5 125.8L582.5 127.8Z" fill="#1010f0"/><circle cx="635.5" cy="86.1" r="5.8" fill="#7a7064" opacity="0.95"/><circle cx="635.5" cy="86.1" r="4.6" fill="#a09486"/><circle cx="635.5" cy="86.1" r="3.1" fill="#d8cfc4"/><path d="M632.7 86.1L634.7 84.1L636.7 86.1L634.7 88.1Z" fill="#f01010"/><path d="M636.1 86.1L638.7 84.1V88.1Z" fill="#f0a818"/><path d="M162.5 90V102M161.0 94.5h1M163.0 98.5h1M167.5 89V96M166.0 91.5h1M168.0 94.5h1M171.5 88V95M170.0 90.5h1M172.0 93.5h1M176.5 88V110M175.0 96.5h1M177.0 103.5h1M181.5 94V119M180.0 103.5h1M182.0 112.5h1M185.5 106V118M184.0 110.5h1M186.0 114.5h1M190.5 110V122M189.0 114.5h1M191.0 118.5h1M195.5 110V125M194.0 115.5h1M196.0 120.5h1M200.5 120V141M199.0 127.5h1M201.0 135.5h1M204.5 106V140M203.0 118.5h1M205.0 130.5h1M209.5 110V126M208.0 116.5h1M210.0 121.5h1M214.5 105V126M213.0 112.5h1M215.0 120.5h1M218.5 90V107M217.0 96.5h1M219.0 102.5h1M223.5 94V108M222.0 99.5h1M224.0 104.5h1M228.5 97V116M227.0 104.5h1M229.0 110.5h1M232.5 93V104M231.0 97.5h1M233.0 101.5h1M237.5 95V105M236.0 98.5h1M238.0 102.5h1M242.5 97V104M241.0 99.5h1M243.0 102.5h1M246.5 96V104M245.0 99.5h1M247.0 102.5h1M251.5 95V102M250.0 97.5h1M252.0 100.5h1M256.5 96V105M255.0 99.5h1M257.0 102.5h1M260.5 98V108M259.0 102.5h1M261.0 105.5h1M265.5 98V104M264.0 100.5h1M266.0 102.5h1M270.5 97V103M269.0 99.5h1M271.0 101.5h1M275.5 96V104M274.0 99.5h1M276.0 102.5h1M279.5 98V112M278.0 103.5h1M280.0 108.5h1M284.5 109V123M283.0 114.5h1M285.0 119.5h1M289.5 114V128M288.0 119.5h1M290.0 124.5h1M293.5 113V122M292.0 116.5h1M294.0 119.5h1M298.5 112V126M297.0 117.5h1M299.0 122.5h1M303.5 123V128M302.0 125.5h1M304.0 126.5h1M307.5 119V132M306.0 124.5h1M308.0 128.5h1M312.5 128V143M311.0 133.5h1M313.0 138.5h1M317.5 137V154M316.0 143.5h1M318.0 149.5h1M321.5 142V162M320.0 149.5h1M322.0 156.5h1M326.5 154V163M325.0 157.5h1M327.0 160.5h1M331.5 147V160M330.0 152.5h1M332.0 156.5h1M335.5 144V158M334.0 149.5h1M336.0 154.5h1M340.5 150V158M339.0 153.5h1M341.0 156.5h1M345.5 150V157M344.0 152.5h1M346.0 155.5h1M350.5 150V154M349.0 151.5h1M351.0 153.5h1M354.5 151V155M353.0 152.5h1M355.0 154.5h1M359.5 154V157M358.0 155.5h1M360.0 156.5h1M364.5 152V157M363.0 154.5h1M365.0 156.5h1M368.5 152V156M367.0 153.5h1M369.0 155.5h1M373.5 152V163M372.0 156.5h1M374.0 160.5h1M378.5 157V167M377.0 160.5h1M379.0 164.5h1M382.5 158V171M381.0 163.5h1M383.0 167.5h1M387.5 168V172M386.0 169.5h1M388.0 171.5h1M392.5 167V176M391.0 170.5h1M393.0 173.5h1M396.5 166V176M395.0 170.5h1M397.0 173.5h1M401.5 160V172M400.0 164.5h1M402.0 168.5h1M406.5 157V171M405.0 162.5h1M407.0 167.5h1M410.5 157V168M409.0 161.5h1M411.0 165.5h1M415.5 161V171M414.0 164.5h1M416.0 168.5h1M420.5 160V171M419.0 164.5h1M421.0 168.5h1M425.5 155V166M424.0 159.5h1M426.0 163.5h1M429.5 138V164M428.0 147.5h1M430.0 156.5h1M434.5 132V145M433.0 137.5h1M435.0 141.5h1M439.5 131V140M438.0 134.5h1M440.0 137.5h1M443.5 131V144M442.0 136.5h1M444.0 140.5h1M448.5 135V144M447.0 138.5h1M449.0 141.5h1M453.5 136V146M452.0 140.5h1M454.0 143.5h1M457.5 140V147M456.0 142.5h1M458.0 145.5h1M462.5 140V148M461.0 143.5h1M463.0 146.5h1M467.5 139V146M466.0 141.5h1M468.0 144.5h1M471.5 139V146M470.0 141.5h1M472.0 144.5h1M476.5 140V146M475.0 142.5h1M477.0 144.5h1M481.5 140V148M480.0 143.5h1M482.0 146.5h1M485.5 135V143M484.0 138.5h1M486.0 141.5h1M490.5 134V143M489.0 137.5h1M491.0 140.5h1M495.5 142V151M494.0 145.5h1M496.0 148.5h1M500.5 147V156M499.0 150.5h1M501.0 153.5h1M504.5 148V154M503.0 150.5h1M505.0 152.5h1M509.5 147V152M508.0 149.5h1M510.0 150.5h1M514.5 153V159M513.0 155.5h1M515.0 157.5h1M518.5 155V160M517.0 157.5h1M519.0 158.5h1M523.5 156V161M522.0 158.5h1M524.0 160.5h1M528.5 159V167M527.0 162.5h1M529.0 165.5h1M532.5 155V165M531.0 158.5h1M533.0 162.5h1M537.5 60V162M536.0 96.5h1M538.0 131.5h1M542.5 63V87M541.0 71.5h1M543.0 80.5h1M546.5 58V91M545.0 70.5h1M547.0 81.5h1M551.5 85V99M550.0 90.5h1M552.0 95.5h1M556.5 85V113M555.0 95.5h1M557.0 105.5h1M560.5 106V132M559.0 115.5h1M561.0 124.5h1M565.5 117V127M564.0 120.5h1M566.0 124.5h1M570.5 115V134M569.0 122.5h1M571.0 128.5h1M575.5 122V135M574.0 127.5h1M576.0 131.5h1M579.5 120V130M578.0 124.5h1M580.0 127.5h1M584.5 120V132M583.0 124.5h1M585.0 128.5h1M589.5 119V127M588.0 122.5h1M590.0 125.5h1M593.5 117V126M592.0 120.5h1M594.0 123.5h1M598.5 107V122M597.0 112.5h1M599.0 118.5h1M603.5 105V112M602.0 107.5h1M604.0 110.5h1M607.5 110V119M606.0 113.5h1M608.0 116.5h1M612.5 112V120M611.0 115.5h1M613.0 118.5h1M617.5 110V116M616.0 112.5h1M618.0 114.5h1M621.5 107V118M620.0 111.5h1M622.0 115.5h1M626.5 96V120M625.0 104.5h1M627.0 113.5h1M631.5 90V106M630.0 96.5h1M632.0 101.5h1M635.5 77V98M634.0 84.5h1M636.0 92.5h1M640.5 85V112M639.0 94.5h1M641.0 104.5h1" stroke="#18c418" stroke-width="1" fill="none" shape-rendering="crispEdges"/></svg>
<div class="t" id="t39" style="left:164.5px;top:52px;font-size:6.9px;color:#e8e8e8;transform-origin:0 0;transform:scaleX(0.796);">EURUSD,H1</div>
<div class="t" id="t40" style="left:199.4px;top:52px;font-size:6.9px;color:#e8e8e8;transform-origin:0 0;transform:scaleX(0.797);">1.1277</div>
<div class="t" id="t41" style="left:217.9px;top:52px;font-size:6.9px;color:#e8e8e8;transform-origin:0 0;transform:scaleX(0.797);">1.1280</div>
<div class="t" id="t42" style="left:236.6px;top:52px;font-size:6.9px;color:#e8e8e8;transform-origin:0 0;transform:scaleX(0.797);">1.1236</div>
<div class="t" id="t43" style="left:255.1px;top:52px;font-size:6.9px;color:#e8e8e8;transform-origin:0 0;transform:scaleX(0.797);">1.1236</div>
<div class="t" id="t44" style="left:165.6px;top:80px;font-size:6.8px;color:#e0e0e0;transform-origin:0 0;transform:scaleX(0.841);">#1676 sell 1.00</div>
<div class="t" id="t45" style="left:165.6px;top:86px;font-size:6.8px;color:#e0e0e0;transform-origin:0 0;transform:scaleX(0.848);">#1676 sl</div>
<div class="t" id="t46" style="left:165.5px;top:119px;font-size:6.8px;color:#e0e0e0;transform-origin:0 0;transform:scaleX(0.880);">#1676 tp</div>
<div class="t" id="t47" style="left:162.3px;top:171px;font-size:14px;color:#f5901a;transform-origin:0 0;transform:scaleX(1.029);">Spread: 2.00</div>
<div class="t" id="t48" style="left:248.5px;top:172px;font-size:5.6px;color:#d83a10;transform-origin:0 0;transform:scaleX(1.058);">max: 2.00</div>
<div class="t" id="t49" style="left:248.5px;top:177px;font-size:5.6px;color:#e08a18;transform-origin:0 0;transform:scaleX(1.130);">avg: 2.00</div>
<div class="t" id="t50" style="left:248.5px;top:182px;font-size:5.6px;color:#d8c020;transform-origin:0 0;transform:scaleX(1.130);">min: 2.00</div>
<div class="t" id="t51" style="left:285.3px;top:171px;font-size:6px;color:#8c8c8c;transform-origin:0 0;transform:scaleX(0.940);">Status</div>
<div class="t" id="t52" style="left:285.2px;top:178px;font-size:10.2px;color:#10d0e0;transform-origin:0 0;transform:scaleX(0.940);">working</div>
<div class="a" style="left:775px;top:65.8px;width:2px;height:1px;background:#8a8a8a"></div>
<div class="t" id="t53" style="left:779.1px;top:64px;font-size:6.7px;color:#e8e8e8;transform-origin:0 0;transform:scaleX(0.840);">1.1305</div>
<div class="a" style="left:775px;top:85.5px;width:2px;height:1px;background:#8a8a8a"></div>
<div class="t" id="t54" style="left:779.1px;top:83px;font-size:6.7px;color:#e8e8e8;transform-origin:0 0;transform:scaleX(0.840);">1.1275</div>
<div class="a" style="left:775px;top:105.2px;width:2px;height:1px;background:#8a8a8a"></div>
<div class="t" id="t55" style="left:779.1px;top:103px;font-size:6.7px;color:#e8e8e8;transform-origin:0 0;transform:scaleX(0.840);">1.1245</div>
<div class="a" style="left:775px;top:124.9px;width:2px;height:1px;background:#8a8a8a"></div>
<div class="t" id="t56" style="left:779.1px;top:123px;font-size:6.7px;color:#e8e8e8;transform-origin:0 0;transform:scaleX(0.840);">1.1215</div>
<div class="a" style="left:775px;top:144.6px;width:2px;height:1px;background:#8a8a8a"></div>
<div class="t" id="t57" style="left:779.1px;top:142px;font-size:6.7px;color:#e8e8e8;transform-origin:0 0;transform:scaleX(0.861);">1.1185</div>
<div class="a" style="left:775px;top:164.3px;width:2px;height:1px;background:#8a8a8a"></div>
<div class="t" id="t58" style="left:779.1px;top:162px;font-size:6.7px;color:#e8e8e8;transform-origin:0 0;transform:scaleX(0.861);">1.1155</div>
<div class="a" style="left:775px;top:184.0px;width:2px;height:1px;background:#8a8a8a"></div>
<div class="t" id="t59" style="left:779.1px;top:182px;font-size:6.7px;color:#e8e8e8;transform-origin:0 0;transform:scaleX(0.861);">1.1125</div>
<div class="a" style="left:775.6px;top:108.9px;width:21.4px;height:5.9px;background:#fff"></div>
<div class="t" id="t60" style="left:778.6px;top:109px;font-size:6.7px;color:#000;transform-origin:0 0;transform:scaleX(0.840);">1.1236</div>
<div class="a" style="left:162.0px;top:187px;width:1px;height:3px;background:#aaa"></div>
<div class="t" id="t61" style="left:161.8px;top:191px;font-size:6.7px;color:#e8e8e8;transform-origin:0 0;transform:scaleX(0.800);">29 Sep 2015</div>
<div class="a" style="left:199.5px;top:187px;width:1px;height:3px;background:#aaa"></div>
<div class="t" id="t62" style="left:199.3px;top:191px;font-size:6.7px;color:#e8e8e8;transform-origin:0 0;transform:scaleX(0.800);">29 Sep 15:00</div>
<div class="a" style="left:237.0px;top:187px;width:1px;height:3px;background:#aaa"></div>
<div class="t" id="t63" style="left:236.8px;top:191px;font-size:6.7px;color:#e8e8e8;transform-origin:0 0;transform:scaleX(0.800);">29 Sep 23:00</div>
<div class="a" style="left:274.5px;top:187px;width:1px;height:3px;background:#aaa"></div>
<div class="t" id="t64" style="left:274.3px;top:191px;font-size:6.7px;color:#e8e8e8;transform-origin:0 0;transform:scaleX(0.800);">30 Sep 07:00</div>
<div class="a" style="left:312.0px;top:187px;width:1px;height:3px;background:#aaa"></div>
<div class="t" id="t65" style="left:311.8px;top:191px;font-size:6.7px;color:#e8e8e8;transform-origin:0 0;transform:scaleX(0.800);">30 Sep 15:00</div>
<div class="a" style="left:349.5px;top:187px;width:1px;height:3px;background:#aaa"></div>
<div class="t" id="t66" style="left:349.3px;top:191px;font-size:6.7px;color:#e8e8e8;transform-origin:0 0;transform:scaleX(0.800);">30 Sep 23:00</div>
<div class="a" style="left:387.0px;top:187px;width:1px;height:3px;background:#aaa"></div>
<div class="t" id="t67" style="left:386.8px;top:191px;font-size:6.7px;color:#e8e8e8;transform-origin:0 0;transform:scaleX(0.800);">1 Oct 07:00</div>
<div class="a" style="left:424.5px;top:187px;width:1px;height:3px;background:#aaa"></div>
<div class="t" id="t68" style="left:424.3px;top:191px;font-size:6.7px;color:#e8e8e8;transform-origin:0 0;transform:scaleX(0.800);">1 Oct 15:00</div>
<div class="a" style="left:462.0px;top:187px;width:1px;height:3px;background:#aaa"></div>
<div class="t" id="t69" style="left:461.8px;top:191px;font-size:6.7px;color:#e8e8e8;transform-origin:0 0;transform:scaleX(0.800);">1 Oct 23:00</div>
<div class="a" style="left:499.5px;top:187px;width:1px;height:3px;background:#aaa"></div>
<div class="t" id="t70" style="left:499.3px;top:191px;font-size:6.7px;color:#e8e8e8;transform-origin:0 0;transform:scaleX(0.800);">2 Oct 07:00</div>
<div class="a" style="left:537.0px;top:187px;width:1px;height:3px;background:#aaa"></div>
<div class="t" id="t71" style="left:536.8px;top:191px;font-size:6.7px;color:#e8e8e8;transform-origin:0 0;transform:scaleX(0.800);">2 Oct 15:00</div>
<div class="a" style="left:574.5px;top:187px;width:1px;height:3px;background:#aaa"></div>
<div class="t" id="t72" style="left:574.3px;top:191px;font-size:6.7px;color:#e8e8e8;transform-origin:0 0;transform:scaleX(0.800);">2 Oct 23:00</div>
<div class="a" style="left:612.0px;top:187px;width:1px;height:3px;background:#aaa"></div>
<div class="t" id="t73" style="left:611.8px;top:191px;font-size:6.7px;color:#e8e8e8;transform-origin:0 0;transform:scaleX(0.800);">5 Oct 07:00</div>
<svg style="left:647px;top:48px" width="9" height="5"><path d="M0 0H8L4 4Z" fill="#b8c4cf"/></svg>
<div class="a" style="left:159px;top:199px;width:641px;height:1px;background:#3a3a3a"></div>
<div class="a" style="left:159px;top:200px;width:641px;height:1px;background:#8e8e8e"></div>
<div class="a" style="left:159px;top:201px;width:641px;height:15px;background:#f0f0f0"></div>
<div class="a" style="left:159px;top:201px;width:348px;height:11px;background:#ededed;border-left:1px solid #777"></div>
<div class="a" style="left:159px;top:214px;width:641px;height:1px;background:#fbfbfb"></div>
<div class="a" style="left:159px;top:216px;width:641px;height:1px;background:#c4c4c4"></div>
<div class="t" id="t74" style="left:167.7px;top:203px;font-size:7.4px;color:#7a7a7a;transform-origin:0 0;transform:scaleX(0.912);">XAUUSD,H1</div>
<div class="t" id="t75" style="left:218.7px;top:203px;font-size:7.4px;color:#7a7a7a;transform-origin:0 0;transform:scaleX(0.904);">USDCAD,H1</div>
<div class="t" id="t76" style="left:269.7px;top:203px;font-size:7.4px;color:#7a7a7a;transform-origin:0 0;transform:scaleX(0.896);">USDJPY,H1</div>
<div class="t" id="t77" style="left:316.7px;top:203px;font-size:7.4px;color:#7a7a7a;transform-origin:0 0;transform:scaleX(0.880);">AUDUSD,H1</div>
<div class="t" id="t78" style="left:367.9px;top:203px;font-size:7.4px;color:#7a7a7a;transform-origin:0 0;transform:scaleX(0.852);">EURGBP,H1</div>
<div class="t" id="t79" style="left:416.8px;top:203px;font-size:7.4px;color:#7a7a7a;transform-origin:0 0;transform:scaleX(0.876);">EURJPY,H1</div>
<div class="t" id="t80" style="left:463.7px;top:203px;font-size:7.4px;color:#7a7a7a;transform-origin:0 0;transform:scaleX(0.871);">EURUSD,H1</div>
<div class="a" style="left:212.6px;top:203px;width:1px;height:8px;background:#9a9a9a"></div>
<div class="a" style="left:263.6px;top:203px;width:1px;height:8px;background:#9a9a9a"></div>
<div class="a" style="left:311.0px;top:203px;width:1px;height:8px;background:#9a9a9a"></div>
<div class="a" style="left:362.0px;top:203px;width:1px;height:8px;background:#9a9a9a"></div>
<div class="a" style="left:413.0px;top:203px;width:1px;height:8px;background:#9a9a9a"></div>
<div class="a" style="left:458.4px;top:203px;width:1px;height:8px;background:#9a9a9a"></div>
<div class="a" style="left:507px;top:200px;width:73px;height:12px;background:#fff;border:1px solid #555;border-top:none;border-radius:0 0 1px 1px"></div>
<div class="t" id="t81" style="left:512.8px;top:203px;font-size:7.4px;color:#111;transform-origin:0 0;transform:scaleX(0.898);">EURUSD,H1 (visual)</div>
<svg style="left:780px;top:204.5px" width="16" height="6"><path d="M3.2 0.5L1 3L3.2 5.5" fill="none" stroke="#666" stroke-width="1"/><path d="M12 0.5L14.2 3L12 5.5" fill="none" stroke="#666" stroke-width="1"/></svg>
<div class="a" style="left:0;top:212px;width:160px;height:1px;background:#b8b8b8"></div>
<div class="a" style="left:159px;top:198px;width:1px;height:14px;background:#8a8a8a"></div>
<svg style="left:2px;top:216.5px" width="5" height="4"><path d="M0.6 0.4L4.4 3.6M4.4 0.4L0.6 3.6" stroke="#222" stroke-width="1"/></svg>
<div class="a" style="left:1px;top:223px;width:7px;height:178px;background:#afcbe8"></div>
<div class="t" style="left:-6px;top:386.5px;font-size:7.5px;color:#2a3a55;transform:rotate(-90deg);transform-origin:center;width:22px;text-align:center">Tester</div>
<div class="a" style="left:9px;top:215px;width:791px;height:173px;background:#fff;border-bottom:1px solid #6a6a6a"></div>
<div class="a" style="left:159px;top:214px;width:641px;height:1px;background:#fbfbfb"></div>
<div class="a" style="left:159px;top:215px;width:641px;height:1px;background:#f0f0f0"></div>
<div class="a" style="left:159px;top:216px;width:641px;height:1px;background:#c4c4c4"></div>
<svg style="left:0;top:0" width="800" height="416"><line x1="30.50" y1="219" x2="30.50" y2="377" stroke="#c4c4c4" stroke-width="0.9" stroke-dasharray="1.6 3.1"/><line x1="49.25" y1="219" x2="49.25" y2="377" stroke="#c4c4c4" stroke-width="0.9" stroke-dasharray="1.6 3.1"/><line x1="68.00" y1="219" x2="68.00" y2="377" stroke="#c4c4c4" stroke-width="0.9" stroke-dasharray="1.6 3.1"/><line x1="86.75" y1="219" x2="86.75" y2="377" stroke="#c4c4c4" stroke-width="0.9" stroke-dasharray="1.6 3.1"/><line x1="105.50" y1="219" x2="105.50" y2="377" stroke="#c4c4c4" stroke-width="0.9" stroke-dasharray="1.6 3.1"/><line x1="124.25" y1="219" x2="124.25" y2="377" stroke="#c4c4c4" stroke-width="0.9" stroke-dasharray="1.6 3.1"/><line x1="143.00" y1="219" x2="143.00" y2="377" stroke="#c4c4c4" stroke-width="0.9" stroke-dasharray="1.6 3.1"/><line x1="161.75" y1="219" x2="161.75" y2="377" stroke="#c4c4c4" stroke-width="0.9" stroke-dasharray="1.6 3.1"/><line x1="180.50" y1="219" x2="180.50" y2="377" stroke="#c4c4c4" stroke-width="0.9" stroke-dasharray="1.6 3.1"/><line x1="199.25" y1="219" x2="199.25" y2="377" stroke="#c4c4c4" stroke-width="0.9" stroke-dasharray="1.6 3.1"/><line x1="218.00" y1="219" x2="218.00" y2="377" stroke="#c4c4c4" stroke-width="0.9" stroke-dasharray="1.6 3.1"/><line x1="236.75" y1="219" x2="236.75" y2="377" stroke="#c4c4c4" stroke-width="0.9" stroke-dasharray="1.6 3.1"/><line x1="255.50" y1="219" x2="255.50" y2="377" stroke="#c4c4c4" stroke-width="0.9" stroke-dasharray="1.6 3.1"/><line x1="274.25" y1="219" x2="274.25" y2="377" stroke="#c4c4c4" stroke-width="0.9" stroke-dasharray="1.6 3.1"/><line x1="293.00" y1="219" x2="293.00" y2="377" stroke="#c4c4c4" stroke-width="0.9" stroke-dasharray="1.6 3.1"/><line x1="311.75" y1="219" x2="311.75" y2="377" stroke="#c4c4c4" stroke-width="0.9" stroke-dasharray="1.6 3.1"/><line x1="330.50" y1="219" x2="330.50" y2="377" stroke="#c4c4c4" stroke-width="0.9" stroke-dasharray="1.6 3.1"/><line x1="349.25" y1="219" x2="349.25" y2="377" stroke="#c4c4c4" stroke-width="0.9" stroke-dasharray="1.6 3.1"/><line x1="368.00" y1="219" x2="368.00" y2="377" stroke="#c4c4c4" stroke-width="0.9" stroke-dasharray="1.6 3.1"/><line x1="386.75" y1="219" x2="386.75" y2="377" stroke="#c4c4c4" stroke-width="0.9" stroke-dasharray="1.6 3.1"/><line x1="405.50" y1="219" x2="405.50" y2="377" stroke="#c4c4c4" stroke-width="0.9" stroke-dasharray="1.6 3.1"/><line x1="424.25" y1="219" x2="424.25" y2="377" stroke="#c4c4c4" stroke-width="0.9" stroke-dasharray="1.6 3.1"/><line x1="443.00" y1="219" x2="443.00" y2="377" stroke="#c4c4c4" stroke-width="0.9" stroke-dasharray="1.6 3.1"/><line x1="461.75" y1="219" x2="461.75" y2="377" stroke="#c4c4c4" stroke-width="0.9" stroke-dasharray="1.6 3.1"/><line x1="480.50" y1="219" x2="480.50" y2="377" stroke="#c4c4c4" stroke-width="0.9" stroke-dasharray="1.6 3.1"/><line x1="499.25" y1="219" x2="499.25" y2="377" stroke="#c4c4c4" stroke-width="0.9" stroke-dasharray="1.6 3.1"/><line x1="518.00" y1="219" x2="518.00" y2="377" stroke="#c4c4c4" stroke-width="0.9" stroke-dasharray="1.6 3.1"/><line x1="536.75" y1="219" x2="536.75" y2="377" stroke="#c4c4c4" stroke-width="0.9" stroke-dasharray="1.6 3.1"/><line x1="555.50" y1="219" x2="555.50" y2="377" stroke="#c4c4c4" stroke-width="0.9" stroke-dasharray="1.6 3.1"/><line x1="574.25" y1="219" x2="574.25" y2="377" stroke="#c4c4c4" stroke-width="0.9" stroke-dasharray="1.6 3.1"/><line x1="593.00" y1="219" x2="593.00" y2="377" stroke="#c4c4c4" stroke-width="0.9" stroke-dasharray="1.6 3.1"/><line x1="611.75" y1="219" x2="611.75" y2="377" stroke="#c4c4c4" stroke-width="0.9" stroke-dasharray="1.6 3.1"/><line x1="630.50" y1="219" x2="630.50" y2="377" stroke="#c4c4c4" stroke-width="0.9" stroke-dasharray="1.6 3.1"/><line x1="649.25" y1="219" x2="649.25" y2="377" stroke="#c4c4c4" stroke-width="0.9" stroke-dasharray="1.6 3.1"/><line x1="668.00" y1="219" x2="668.00" y2="377" stroke="#c4c4c4" stroke-width="0.9" stroke-dasharray="1.6 3.1"/><line x1="686.75" y1="219" x2="686.75" y2="377" stroke="#c4c4c4" stroke-width="0.9" stroke-dasharray="1.6 3.1"/><line x1="705.50" y1="219" x2="705.50" y2="377" stroke="#c4c4c4" stroke-width="0.9" stroke-dasharray="1.6 3.1"/><line x1="724.25" y1="219" x2="724.25" y2="377" stroke="#c4c4c4" stroke-width="0.9" stroke-dasharray="1.6 3.1"/><line x1="743.00" y1="219" x2="743.00" y2="377" stroke="#c4c4c4" stroke-width="0.9" stroke-dasharray="1.6 3.1"/><line x1="761.75" y1="219" x2="761.75" y2="377" stroke="#c4c4c4" stroke-width="0.9" stroke-dasharray="1.6 3.1"/><line x1="12" y1="358.30" x2="771" y2="358.30" stroke="#c4c4c4" stroke-width="0.9" stroke-dasharray="1.6 3.1"/><line x1="12" y1="339.60" x2="771" y2="339.60" stroke="#c4c4c4" stroke-width="0.9" stroke-dasharray="1.6 3.1"/><line x1="12" y1="320.90" x2="771" y2="320.90" stroke="#c4c4c4" stroke-width="0.9" stroke-dasharray="1.6 3.1"/><line x1="12" y1="302.20" x2="771" y2="302.20" stroke="#c4c4c4" stroke-width="0.9" stroke-dasharray="1.6 3.1"/><line x1="12" y1="283.50" x2="771" y2="283.50" stroke="#c4c4c4" stroke-width="0.9" stroke-dasharray="1.6 3.1"/><line x1="12" y1="264.80" x2="771" y2="264.80" stroke="#c4c4c4" stroke-width="0.9" stroke-dasharray="1.6 3.1"/><line x1="12" y1="246.10" x2="771" y2="246.10" stroke="#c4c4c4" stroke-width="0.9" stroke-dasharray="1.6 3.1"/><line x1="12" y1="227.40" x2="771" y2="227.40" stroke="#c4c4c4" stroke-width="0.9" stroke-dasharray="1.6 3.1"/><path d="M12 218.5V377.3H771.5V218.5Z" fill="none" stroke="#5a5a5a" stroke-width="1.1"/><path d="M12.00 363.75 L14.25 364.83 L16.50 365.32 L18.75 367.00 L20.94 366.16 L23.12 362.93 L25.31 361.49 L27.50 361.25 L29.58 361.37 L31.67 357.88 L33.75 358.00 L35.94 358.00 L38.12 359.20 L40.31 356.80 L42.50 358.00 L45.00 361.12 L47.50 361.23 L50.00 363.75 L53.75 360.00 L55.83 359.63 L57.92 360.47 L60.00 362.50 L62.50 364.77 L65.00 366.43 L67.50 367.50 L69.69 365.55 L71.88 365.40 L74.06 364.05 L76.25 364.50 L78.44 366.32 L80.62 366.35 L82.81 365.18 L85.00 367.00 L87.00 368.45 L89.00 366.30 L91.00 367.15 L93.00 369.20 L95.00 368.25 L97.00 367.15 L99.00 369.65 L101.00 369.75 L103.00 369.25 L105.00 368.75 L107.50 366.30 L110.00 366.25 L112.00 365.50 L114.00 364.75 L116.00 367.00 L118.00 365.05 L120.00 365.50 L122.50 365.17 L125.00 365.43 L127.50 364.50 L130.00 362.02 L132.50 360.75 L134.58 364.37 L136.67 364.38 L138.75 368.00 L142.50 363.75 L145.00 363.28 L147.50 360.42 L150.00 358.75 L152.50 360.37 L155.00 358.98 L157.50 360.00 L159.50 359.20 L161.50 362.00 L163.50 362.40 L165.50 361.00 L167.50 362.00 L170.00 364.12 L172.50 366.25 L174.58 366.30 L176.67 369.95 L178.75 370.00 L182.50 365.50 L185.00 364.30 L187.50 366.70 L190.00 365.50 L192.19 365.11 L194.38 368.32 L196.56 367.34 L198.75 368.75 L201.25 367.73 L203.75 365.50 L205.83 365.87 L207.92 364.43 L210.00 363.00 L212.50 363.83 L215.00 365.27 L217.50 365.50 L220.00 365.82 L222.50 363.75 L224.58 365.77 L226.67 366.58 L228.75 368.00 L230.83 366.00 L232.92 363.40 L235.00 362.00 L237.08 360.57 L239.17 359.73 L241.25 359.50 L243.75 359.18 L246.25 361.25 L250.00 358.75 L253.75 360.00 L255.83 362.45 L257.92 362.50 L260.00 363.75 L262.50 364.32 L265.00 362.50 L267.08 364.10 L269.17 364.50 L271.25 365.50 L275.00 359.50 L277.50 361.35 L280.00 362.00 L282.50 358.75 L285.00 355.50 L287.50 355.82 L290.00 353.75 L292.08 351.72 L294.17 350.88 L296.25 351.25 L300.00 345.00 L302.50 344.70 L305.00 342.00 L307.08 341.77 L309.17 339.73 L311.25 339.50 L313.75 336.00 L316.25 332.50 L318.33 331.73 L320.42 332.77 L322.50 332.00 L324.58 331.27 L326.67 328.13 L328.75 328.00 L330.83 325.80 L332.92 327.20 L335.00 325.00 L337.50 327.20 L340.00 327.00 L342.50 326.00 L345.00 325.00 L347.50 322.50 L350.00 320.00 L352.08 319.17 L354.17 319.53 L356.25 317.50 L358.33 317.68 L360.42 317.87 L362.50 316.25 L365.00 317.27 L367.50 315.88 L370.00 317.50 L372.50 317.80 L375.00 320.50 L378.75 315.50 L381.25 317.12 L383.75 318.75 L386.25 319.98 L388.75 320.00 L391.25 316.30 L393.75 315.00 L395.83 312.80 L397.92 313.00 L400.00 312.00 L402.50 311.57 L405.00 308.75 L407.50 306.48 L410.00 303.00 L413.75 306.25 L415.83 306.00 L417.92 306.35 L420.00 305.50 L423.75 303.75 L426.25 300.38 L428.75 297.00 L430.83 296.38 L432.92 298.77 L435.00 298.75 L437.50 299.17 L440.00 298.98 L442.50 300.00 L445.00 301.87 L447.50 300.13 L450.00 302.00 L452.08 302.35 L454.17 300.30 L456.25 301.25 L458.33 300.23 L460.42 300.42 L462.50 300.00 L465.00 300.40 L467.50 301.40 L470.00 303.00 L473.75 297.00 L476.25 296.85 L478.75 295.50 L482.50 287.50 L486.25 285.00 L488.33 286.60 L490.42 287.60 L492.50 288.00 L496.25 288.75 L500.00 285.50 L502.50 284.05 L505.00 285.00 L507.50 283.15 L510.00 282.50 L513.75 283.00 L517.50 280.00 L520.00 280.35 L522.50 279.50 L525.00 281.52 L527.50 283.53 L530.00 283.75 L532.08 282.92 L534.17 281.48 L536.25 281.25 L540.00 278.75 L542.50 276.23 L545.00 272.50 L547.50 271.20 L550.00 267.50 L552.08 267.92 L554.17 268.93 L556.25 268.75 L558.33 267.50 L560.42 266.85 L562.50 265.00 L566.25 267.50 L568.33 265.65 L570.42 264.40 L572.50 263.75 L575.00 263.38 L577.50 264.82 L580.00 266.25 L582.50 263.77 L585.00 262.50 L587.50 263.40 L590.00 265.50 L592.50 265.65 L595.00 267.00 L598.75 263.75 L600.83 264.63 L602.92 268.52 L605.00 270.00 L607.50 268.07 L610.00 263.75 L612.50 261.02 L615.00 259.50 L617.50 260.38 L620.00 261.25 L622.50 260.62 L625.00 260.00 L627.50 260.05 L630.00 261.90 L632.50 263.75 L635.00 263.10 L637.50 261.25 L640.00 263.87 L642.50 264.08 L645.00 265.50 L647.50 265.70 L650.00 264.70 L652.50 262.50 L655.00 262.08 L657.50 261.07 L660.00 261.25 L662.08 261.62 L664.17 260.78 L666.25 258.75 L668.33 257.97 L670.42 260.18 L672.50 260.00 L676.25 263.00 L680.00 260.00 L683.75 255.00 L685.83 254.95 L687.92 253.10 L690.00 251.25 L692.50 253.72 L695.00 255.00 L697.08 257.43 L699.17 259.27 L701.25 260.50 L705.00 261.25 L707.50 257.00 L710.00 254.18 L712.50 253.75 L715.00 255.43 L717.50 256.52 L720.00 257.00 L722.08 255.13 L724.17 255.07 L726.25 255.00 L730.00 252.50 L732.08 248.38 L734.17 246.07 L736.25 243.75 L738.33 245.60 L740.42 245.65 L742.50 247.50 L746.25 243.75 L748.33 242.97 L750.42 244.58 L752.50 245.00 L755.00 244.70 L757.50 242.00 L760.00 239.80 L762.50 240.00 L766.25 237.50 L768.48 234.00 L770.70 232.90" fill="none" stroke="#0e0eb8" stroke-width="1.6" stroke-linejoin="round"/></svg>
<div class="t" id="t82" style="left:13.6px;top:220px;font-size:6.6px;color:#000;transform-origin:0 0;transform:scaleX(0.872);"><span style="color:#2b2bd0">Balance</span> <span style="color:#555">/</span> <span style="color:#3cc03c">Equity</span></div>
<div class="a" style="left:771.5px;top:376.5px;width:2px;height:1px;background:#555"></div>
<div class="t" id="t83" style="left:775px;top:376px;font-size:6.6px;color:#222;transform-origin:0 0;transform:scaleX(0.859);">5485</div>
<div class="a" style="left:771.5px;top:357.8px;width:2px;height:1px;background:#555"></div>
<div class="t" id="t84" style="left:775px;top:357px;font-size:6.6px;color:#222;transform-origin:0 0;transform:scaleX(0.873);">11493</div>
<div class="a" style="left:771.5px;top:339.1px;width:2px;height:1px;background:#555"></div>
<div class="t" id="t85" style="left:775px;top:338px;font-size:6.6px;color:#222;transform-origin:0 0;transform:scaleX(0.850);">17501</div>
<div class="a" style="left:771.5px;top:320.4px;width:2px;height:1px;background:#555"></div>
<div class="t" id="t86" style="left:775px;top:319px;font-size:6.6px;color:#222;transform-origin:0 0;transform:scaleX(0.850);">23509</div>
<div class="a" style="left:771.5px;top:301.7px;width:2px;height:1px;background:#555"></div>
<div class="t" id="t87" style="left:775px;top:301px;font-size:6.6px;color:#222;transform-origin:0 0;transform:scaleX(0.850);">29517</div>
<div class="a" style="left:771.5px;top:283.0px;width:2px;height:1px;background:#555"></div>
<div class="t" id="t88" style="left:775px;top:282px;font-size:6.6px;color:#222;transform-origin:0 0;transform:scaleX(0.850);">35526</div>
<div class="a" style="left:771.5px;top:264.3px;width:2px;height:1px;background:#555"></div>
<div class="t" id="t89" style="left:775px;top:263px;font-size:6.6px;color:#222;transform-origin:0 0;transform:scaleX(0.850);">41534</div>
<div class="a" style="left:771.5px;top:245.6px;width:2px;height:1px;background:#555"></div>
<div class="t" id="t90" style="left:775px;top:245px;font-size:6.6px;color:#222;transform-origin:0 0;transform:scaleX(0.850);">47542</div>
<div class="a" style="left:771.5px;top:226.9px;width:2px;height:1px;background:#555"></div>
<div class="t" id="t91" style="left:775px;top:226px;font-size:6.6px;color:#222;transform-origin:0 0;transform:scaleX(0.850);">53550</div>
<div class="t" style="left:11.7px;top:379.21px;font-size:6.6px;color:#222">0</div>
<div class="t" style="left:-9.90px;top:379.21px;width:40px;text-align:right;font-size:6.6px;color:#222;transform-origin:100% 0;transform:scaleX(0.82)">46</div>
<div class="t" style="left:8.85px;top:379.21px;width:40px;text-align:right;font-size:6.6px;color:#222;transform-origin:100% 0;transform:scaleX(0.82)">88</div>
<div class="t" style="left:27.60px;top:379.21px;width:40px;text-align:right;font-size:6.6px;color:#222;transform-origin:100% 0;transform:scaleX(0.82)">129</div>
<div class="t" style="left:46.35px;top:379.21px;width:40px;text-align:right;font-size:6.6px;color:#222;transform-origin:100% 0;transform:scaleX(0.82)">170</div>
<div class="t" style="left:65.10px;top:379.21px;width:40px;text-align:right;font-size:6.6px;color:#222;transform-origin:100% 0;transform:scaleX(0.82)">212</div>
<div class="t" style="left:83.85px;top:379.21px;width:40px;text-align:right;font-size:6.6px;color:#222;transform-origin:100% 0;transform:scaleX(0.82)">253</div>
<div class="t" style="left:102.60px;top:379.21px;width:40px;text-align:right;font-size:6.6px;color:#222;transform-origin:100% 0;transform:scaleX(0.82)">294</div>
<div class="t" style="left:121.35px;top:379.21px;width:40px;text-align:right;font-size:6.6px;color:#222;transform-origin:100% 0;transform:scaleX(0.82)">336</div>
<div class="t" style="left:140.10px;top:379.21px;width:40px;text-align:right;font-size:6.6px;color:#222;transform-origin:100% 0;transform:scaleX(0.82)">377</div>
<div class="t" style="left:158.85px;top:379.21px;width:40px;text-align:right;font-size:6.6px;color:#222;transform-origin:100% 0;transform:scaleX(0.82)">418</div>
<div class="t" style="left:177.60px;top:379.21px;width:40px;text-align:right;font-size:6.6px;color:#222;transform-origin:100% 0;transform:scaleX(0.82)">459</div>
<div class="t" style="left:196.35px;top:379.21px;width:40px;text-align:right;font-size:6.6px;color:#222;transform-origin:100% 0;transform:scaleX(0.82)">501</div>
<div class="t" style="left:215.10px;top:379.21px;width:40px;text-align:right;font-size:6.6px;color:#222;transform-origin:100% 0;transform:scaleX(0.82)">542</div>
<div class="t" style="left:233.85px;top:379.21px;width:40px;text-align:right;font-size:6.6px;color:#222;transform-origin:100% 0;transform:scaleX(0.82)">583</div>
<div class="t" style="left:252.60px;top:379.21px;width:40px;text-align:right;font-size:6.6px;color:#222;transform-origin:100% 0;transform:scaleX(0.82)">625</div>
<div class="t" style="left:271.35px;top:379.21px;width:40px;text-align:right;font-size:6.6px;color:#222;transform-origin:100% 0;transform:scaleX(0.82)">666</div>
<div class="t" style="left:290.10px;top:379.21px;width:40px;text-align:right;font-size:6.6px;color:#222;transform-origin:100% 0;transform:scaleX(0.82)">707</div>
<div class="t" style="left:308.85px;top:379.21px;width:40px;text-align:right;font-size:6.6px;color:#222;transform-origin:100% 0;transform:scaleX(0.82)">749</div>
<div class="t" style="left:327.60px;top:379.21px;width:40px;text-align:right;font-size:6.6px;color:#222;transform-origin:100% 0;transform:scaleX(0.82)">790</div>
<div class="t" style="left:346.35px;top:379.21px;width:40px;text-align:right;font-size:6.6px;color:#222;transform-origin:100% 0;transform:scaleX(0.82)">831</div>
<div class="t" style="left:365.10px;top:379.21px;width:40px;text-align:right;font-size:6.6px;color:#222;transform-origin:100% 0;transform:scaleX(0.82)">872</div>
<div class="t" style="left:383.85px;top:379.21px;width:40px;text-align:right;font-size:6.6px;color:#222;transform-origin:100% 0;transform:scaleX(0.82)">914</div>
<div class="t" style="left:402.60px;top:379.21px;width:40px;text-align:right;font-size:6.6px;color:#222;transform-origin:100% 0;transform:scaleX(0.82)">955</div>
<div class="t" style="left:421.35px;top:379.21px;width:40px;text-align:right;font-size:6.6px;color:#222;transform-origin:100% 0;transform:scaleX(0.82)">996</div>
<div class="t" style="left:440.10px;top:379.21px;width:40px;text-align:right;font-size:6.6px;color:#222;transform-origin:100% 0;transform:scaleX(0.82)">1038</div>
<div class="t" style="left:458.85px;top:379.21px;width:40px;text-align:right;font-size:6.6px;color:#222;transform-origin:100% 0;transform:scaleX(0.82)">1079</div>
<div class="t" style="left:477.60px;top:379.21px;width:40px;text-align:right;font-size:6.6px;color:#222;transform-origin:100% 0;transform:scaleX(0.82)">1120</div>
<div class="t" style="left:496.35px;top:379.21px;width:40px;text-align:right;font-size:6.6px;color:#222;transform-origin:100% 0;transform:scaleX(0.82)">1162</div>
<div class="t" style="left:515.10px;top:379.21px;width:40px;text-align:right;font-size:6.6px;color:#222;transform-origin:100% 0;transform:scaleX(0.82)">1203</div>
<div class="t" style="left:533.85px;top:379.21px;width:40px;text-align:right;font-size:6.6px;color:#222;transform-origin:100% 0;transform:scaleX(0.82)">1244</div>
<div class="t" style="left:552.60px;top:379.21px;width:40px;text-align:right;font-size:6.6px;color:#222;transform-origin:100% 0;transform:scaleX(0.82)">1286</div>
<div class="t" style="left:571.35px;top:379.21px;width:40px;text-align:right;font-size:6.6px;color:#222;transform-origin:100% 0;transform:scaleX(0.82)">1327</div>
<div class="t" style="left:590.10px;top:379.21px;width:40px;text-align:right;font-size:6.6px;color:#222;transform-origin:100% 0;transform:scaleX(0.82)">1368</div>
<div class="t" style="left:608.85px;top:379.21px;width:40px;text-align:right;font-size:6.6px;color:#222;transform-origin:100% 0;transform:scaleX(0.82)">1409</div>
<div class="t" style="left:627.60px;top:379.21px;width:40px;text-align:right;font-size:6.6px;color:#222;transform-origin:100% 0;transform:scaleX(0.82)">1451</div>
<div class="t" style="left:646.35px;top:379.21px;width:40px;text-align:right;font-size:6.6px;color:#222;transform-origin:100% 0;transform:scaleX(0.82)">1492</div>
<div class="t" style="left:665.10px;top:379.21px;width:40px;text-align:right;font-size:6.6px;color:#222;transform-origin:100% 0;transform:scaleX(0.82)">1533</div>
<div class="t" style="left:683.85px;top:379.21px;width:40px;text-align:right;font-size:6.6px;color:#222;transform-origin:100% 0;transform:scaleX(0.82)">1575</div>
<div class="t" style="left:702.60px;top:379.21px;width:40px;text-align:right;font-size:6.6px;color:#222;transform-origin:100% 0;transform:scaleX(0.82)">1616</div>
<div class="t" style="left:721.35px;top:379.21px;width:40px;text-align:right;font-size:6.6px;color:#222;transform-origin:100% 0;transform:scaleX(0.82)">1657</div>
<div class="a" style="left:352px;top:350px;width:117px;height:28px;background:linear-gradient(#ffffff,#eef0f6);border:1px solid #b8b8b8;box-shadow:1px 1px 1.5px rgba(0,0,0,0.35)"></div>
<div class="t" id="t92" style="left:355px;top:352px;font-size:7.3px;color:#8a8a8a;transform-origin:0 0;transform:scaleX(0.917);">7191 : Lots 1.00</div>
<div class="t" id="t93" style="left:355px;top:361px;font-size:7.3px;color:#8a8a8a;transform-origin:0 0;transform:scaleX(0.868);">2015.02.10 12:20</div>
<div class="t" id="t94" style="left:355px;top:369px;font-size:7.3px;color:#8a8a8a;transform-origin:0 0;transform:scaleX(0.937);">#750 t/p 1.00 at 1.1279 profit 600.00</div>
<div class="a" style="left:9px;top:388px;width:791px;height:13px;background:#f0f0f0"></div>
<div class="a" style="left:80px;top:387px;width:31px;height:12px;background:#fff;border:1px solid #666;border-top:none;border-radius:0 0 2px 2px"></div>
<div class="t" id="t95" style="left:15.9px;top:389px;font-size:8px;color:#767676;transform-origin:0 0;transform:scaleX(0.920);">Settings</div>
<div class="t" id="t96" style="left:52.1px;top:389px;font-size:8px;color:#767676;transform-origin:0 0;transform:scaleX(0.843);">Results</div>
<div class="t" id="t97" style="left:85.9px;top:389px;font-size:8px;color:#111;transform-origin:0 0;transform:scaleX(0.855);">Graph</div>
<div class="t" id="t98" style="left:116.6px;top:389px;font-size:8px;color:#767676;transform-origin:0 0;transform:scaleX(0.866);">Report</div>
<div class="t" id="t99" style="left:148.4px;top:389px;font-size:8px;color:#767676;transform-origin:0 0;transform:scaleX(0.914);">Journal</div>
<div class="a" style="left:47px;top:389px;width:1px;height:9px;background:#999"></div>
<div class="a" style="left:143px;top:389px;width:1px;height:9px;background:#999"></div>
<div class="a" style="left:177px;top:389px;width:1px;height:9px;background:#999"></div>
<div class="a" style="left:0px;top:401px;width:800px;height:15px;background:#f0f0f0;border-top:1px solid #d9d9d9"></div>
<div class="t" id="t100" style="left:0.9px;top:406px;font-size:8px;color:#111;transform-origin:0 0;transform:scaleX(0.888);">Tester graph page</div>
<div class="a" style="left:393.7px;top:404px;width:1px;height:12px;background:#cfcfcf"></div>
<div class="a" style="left:462px;top:404px;width:1px;height:12px;background:#cfcfcf"></div>
<div class="a" style="left:521.7px;top:404px;width:1px;height:12px;background:#cfcfcf"></div>
<div class="a" style="left:563px;top:404px;width:1px;height:12px;background:#cfcfcf"></div>
<div class="a" style="left:604.7px;top:404px;width:1px;height:12px;background:#cfcfcf"></div>
<div class="a" style="left:644.6px;top:404px;width:1px;height:12px;background:#cfcfcf"></div>
<div class="a" style="left:685.8px;top:404px;width:1px;height:12px;background:#cfcfcf"></div>
<div class="a" style="left:723.8px;top:404px;width:1px;height:12px;background:#cfcfcf"></div>
<div class="t" id="t101" style="left:396.6px;top:406px;font-size:8px;color:#111;transform-origin:0 0;transform:scaleX(0.950);">Default</div>
<svg style="left:727px;top:405.5px" width="15" height="9"><rect x="0" y="0.5" width="14" height="8" fill="#7c9c34"/><path d="M0 8.5L14 1.5V8.5Z" fill="#245a88"/><rect x="1.0" y="0" width="0.5" height="9" fill="#f0f0f0" opacity="0.6"/><rect x="2.5" y="0" width="0.5" height="9" fill="#f0f0f0" opacity="0.6"/><rect x="4.0" y="0" width="0.5" height="9" fill="#f0f0f0" opacity="0.6"/><rect x="5.5" y="0" width="0.5" height="9" fill="#f0f0f0" opacity="0.6"/><rect x="7.0" y="0" width="0.5" height="9" fill="#f0f0f0" opacity="0.6"/><rect x="8.5" y="0" width="0.5" height="9" fill="#f0f0f0" opacity="0.6"/><rect x="10.0" y="0" width="0.5" height="9" fill="#f0f0f0" opacity="0.6"/><rect x="11.5" y="0" width="0.5" height="9" fill="#f0f0f0" opacity="0.6"/><rect x="13.0" y="0" width="0.5" height="9" fill="#f0f0f0" opacity="0.6"/></svg>
<div class="t" id="t102" style="left:743.2px;top:406px;font-size:8px;color:#111;transform-origin:0 0;transform:scaleX(0.891);">2267/5 kb</div>
</body></html>
